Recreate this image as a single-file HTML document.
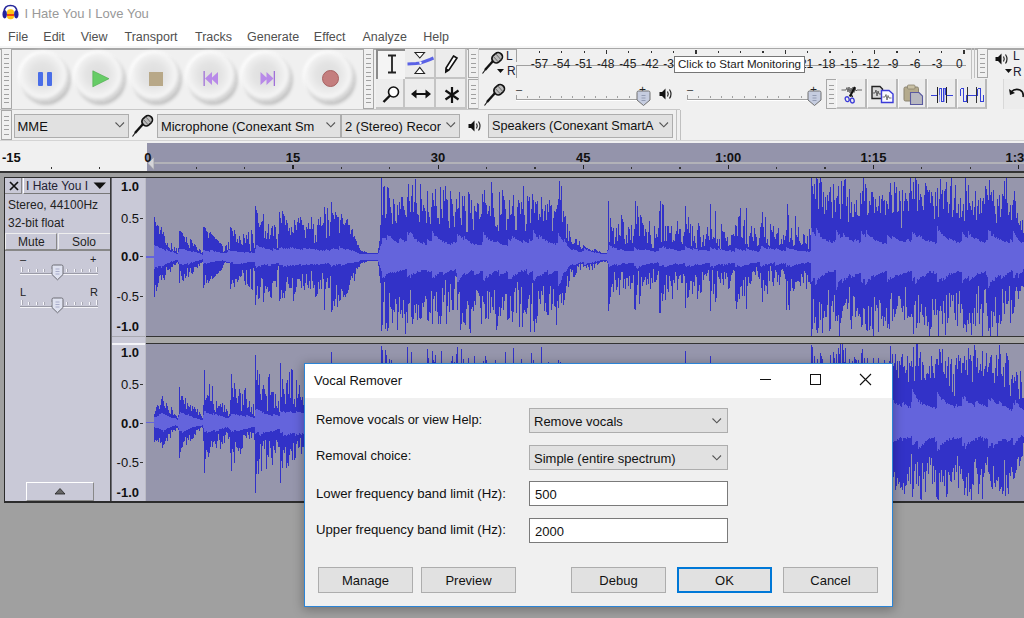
<!DOCTYPE html><html><head><meta charset="utf-8"><style>
*{margin:0;padding:0;box-sizing:border-box}
body{width:1024px;height:618px;overflow:hidden;position:relative;background:#a0a0a0;font-family:"Liberation Sans",sans-serif}
.t{position:absolute;white-space:nowrap;font-family:"Liberation Sans",sans-serif}
.b{position:absolute}
svg{position:absolute;overflow:visible}
</style></head><body><div class="b" style="left:0px;top:0px;width:1024px;height:47px;background:#fff"></div>
<svg style="left:0px;top:0px" width="22" height="22" viewBox="0 0 22 22">
<path d="M4.2 12 C4 7.5 6.5 5.6 10.5 5.6 C14.5 5.6 17 7.5 16.8 12" fill="none" stroke="#26279a" stroke-width="1.5"/>
<rect x="7" y="9.3" width="7" height="10" rx="3" fill="#fcc418"/>
<rect x="7" y="14" width="7" height="2" fill="#f2460e"/>
<ellipse cx="4.7" cy="14.3" rx="2.2" ry="4.1" fill="#23239c"/>
<ellipse cx="16.3" cy="14.3" rx="2.2" ry="4.1" fill="#23239c"/>
</svg>
<div class="t" style="left:24.5px;top:6.5px;font-size:13px;line-height:13px;color:#999;font-weight:normal;">I Hate You I Love You</div>
<div class="t" style="left:8px;top:31px;font-size:12.5px;line-height:12.5px;color:#505050;font-weight:normal;">File</div>
<div class="t" style="left:43.3px;top:31px;font-size:12.5px;line-height:12.5px;color:#505050;font-weight:normal;">Edit</div>
<div class="t" style="left:80.7px;top:31px;font-size:12.5px;line-height:12.5px;color:#505050;font-weight:normal;">View</div>
<div class="t" style="left:124.5px;top:31px;font-size:12.5px;line-height:12.5px;color:#505050;font-weight:normal;">Transport</div>
<div class="t" style="left:195px;top:31px;font-size:12.5px;line-height:12.5px;color:#505050;font-weight:normal;">Tracks</div>
<div class="t" style="left:247px;top:31px;font-size:12.5px;line-height:12.5px;color:#505050;font-weight:normal;">Generate</div>
<div class="t" style="left:313.8px;top:31px;font-size:12.5px;line-height:12.5px;color:#505050;font-weight:normal;">Effect</div>
<div class="t" style="left:362.5px;top:31px;font-size:12.5px;line-height:12.5px;color:#505050;font-weight:normal;">Analyze</div>
<div class="t" style="left:423.3px;top:31px;font-size:12.5px;line-height:12.5px;color:#505050;font-weight:normal;">Help</div>
<div class="b" style="left:0px;top:47px;width:1024px;height:94px;background:#f0f0f0"></div>
<div class="b" style="left:0px;top:46px;width:1024px;height:1.5px;background:#f6f6f6"></div>
<div class="b" style="left:0px;top:47.7px;width:1024px;height:2px;background:#a8a8a8"></div>
<div class="b" style="left:1px;top:48px;width:11px;height:61px;background:#f0f0f0;border:1px solid #a8a8a8"></div>
<div class="b" style="left:4px;top:54.0px;width:5px;height:1px;background:#a0a0a0"></div>
<div class="b" style="left:4px;top:58.4px;width:5px;height:1px;background:#a0a0a0"></div>
<div class="b" style="left:4px;top:62.8px;width:5px;height:1px;background:#a0a0a0"></div>
<div class="b" style="left:4px;top:67.2px;width:5px;height:1px;background:#a0a0a0"></div>
<div class="b" style="left:4px;top:71.6px;width:5px;height:1px;background:#a0a0a0"></div>
<div class="b" style="left:4px;top:76.0px;width:5px;height:1px;background:#a0a0a0"></div>
<div class="b" style="left:4px;top:80.4px;width:5px;height:1px;background:#a0a0a0"></div>
<div class="b" style="left:4px;top:84.80000000000001px;width:5px;height:1px;background:#a0a0a0"></div>
<div class="b" style="left:4px;top:89.2px;width:5px;height:1px;background:#a0a0a0"></div>
<div class="b" style="left:4px;top:93.6px;width:5px;height:1px;background:#a0a0a0"></div>
<div class="b" style="left:4px;top:98.0px;width:5px;height:1px;background:#a0a0a0"></div>
<div class="b" style="left:4px;top:102.4px;width:5px;height:1px;background:#a0a0a0"></div>
<div class="b" style="left:0px;top:109px;width:680px;height:1px;background:#c8c8c8"></div>
<div class="b" style="left:19.799999999999997px;top:53.099999999999994px;width:49px;height:49px;border-radius:50%;background:radial-gradient(circle at 46% 44%, #dedede 0, #e4e4e4 30%, #eeeeee 48%, #f8f8f8 62%, #fcfcfc 76%, #f2f2f2 100%);box-shadow:inset -2px -3px 3px rgba(0,0,0,0.16), 1.5px 2.5px 3px rgba(0,0,0,0.22), -2px -2px 3px rgba(255,255,255,0.9);filter:blur(0.9px)"></div>
<div class="b" style="left:75.3px;top:53.099999999999994px;width:49px;height:49px;border-radius:50%;background:radial-gradient(circle at 46% 44%, #dedede 0, #e4e4e4 30%, #eeeeee 48%, #f8f8f8 62%, #fcfcfc 76%, #f2f2f2 100%);box-shadow:inset -2px -3px 3px rgba(0,0,0,0.16), 1.5px 2.5px 3px rgba(0,0,0,0.22), -2px -2px 3px rgba(255,255,255,0.9);filter:blur(0.9px)"></div>
<div class="b" style="left:130.7px;top:53.099999999999994px;width:49px;height:49px;border-radius:50%;background:radial-gradient(circle at 46% 44%, #dedede 0, #e4e4e4 30%, #eeeeee 48%, #f8f8f8 62%, #fcfcfc 76%, #f2f2f2 100%);box-shadow:inset -2px -3px 3px rgba(0,0,0,0.16), 1.5px 2.5px 3px rgba(0,0,0,0.22), -2px -2px 3px rgba(255,255,255,0.9);filter:blur(0.9px)"></div>
<div class="b" style="left:186.7px;top:53.099999999999994px;width:49px;height:49px;border-radius:50%;background:radial-gradient(circle at 46% 44%, #dedede 0, #e4e4e4 30%, #eeeeee 48%, #f8f8f8 62%, #fcfcfc 76%, #f2f2f2 100%);box-shadow:inset -2px -3px 3px rgba(0,0,0,0.16), 1.5px 2.5px 3px rgba(0,0,0,0.22), -2px -2px 3px rgba(255,255,255,0.9);filter:blur(0.9px)"></div>
<div class="b" style="left:241.7px;top:53.099999999999994px;width:49px;height:49px;border-radius:50%;background:radial-gradient(circle at 46% 44%, #dedede 0, #e4e4e4 30%, #eeeeee 48%, #f8f8f8 62%, #fcfcfc 76%, #f2f2f2 100%);box-shadow:inset -2px -3px 3px rgba(0,0,0,0.16), 1.5px 2.5px 3px rgba(0,0,0,0.22), -2px -2px 3px rgba(255,255,255,0.9);filter:blur(0.9px)"></div>
<div class="b" style="left:305.1px;top:53.099999999999994px;width:49px;height:49px;border-radius:50%;background:radial-gradient(circle at 46% 44%, #dedede 0, #e4e4e4 30%, #eeeeee 48%, #f8f8f8 62%, #fcfcfc 76%, #f2f2f2 100%);box-shadow:inset -2px -3px 3px rgba(0,0,0,0.16), 1.5px 2.5px 3px rgba(0,0,0,0.22), -2px -2px 3px rgba(255,255,255,0.9);filter:blur(0.9px)"></div>
<div class="b" style="left:37.8px;top:72px;width:5px;height:13.5px;background:#4a6ee8;border-radius:1px"></div>
<div class="b" style="left:46.5px;top:72px;width:5px;height:13.5px;background:#4a6ee8;border-radius:1px"></div>
<svg style="left:92px;top:70px" width="18" height="18"><path d="M0.8 0.8 L17 8.7 L0.8 16.8Z" fill="#66cc66" stroke="#4aa94a" stroke-width="0.6"/></svg>
<div class="b" style="left:148.8px;top:72px;width:14px;height:13.5px;background:#b8a888"></div>
<svg style="left:203px;top:70px" width="17" height="17"><rect x="0.5" y="1" width="1.3" height="15" fill="#a070d8"/><path d="M2 8.5 L9 2 V15Z M8 8.5 L15 2 V15Z" fill="#b88ae8"/></svg>
<svg style="left:259px;top:70px" width="17" height="17"><rect x="14.7" y="1" width="1.3" height="15" fill="#a070d8"/><path d="M14.5 8.5 L7.5 2 V15Z M8.5 8.5 L1.5 2 V15Z" fill="#b88ae8"/></svg>
<div class="b" style="left:321.6px;top:69.6px;width:17px;height:17px;border-radius:50%;background:#c47e7e;border:1px solid #a86262"></div>
<div class="b" style="left:363px;top:48px;width:11px;height:61px;background:#f0f0f0;border:1px solid #a8a8a8"></div>
<div class="b" style="left:366px;top:54.0px;width:5px;height:1px;background:#a0a0a0"></div>
<div class="b" style="left:366px;top:58.4px;width:5px;height:1px;background:#a0a0a0"></div>
<div class="b" style="left:366px;top:62.8px;width:5px;height:1px;background:#a0a0a0"></div>
<div class="b" style="left:366px;top:67.2px;width:5px;height:1px;background:#a0a0a0"></div>
<div class="b" style="left:366px;top:71.6px;width:5px;height:1px;background:#a0a0a0"></div>
<div class="b" style="left:366px;top:76.0px;width:5px;height:1px;background:#a0a0a0"></div>
<div class="b" style="left:366px;top:80.4px;width:5px;height:1px;background:#a0a0a0"></div>
<div class="b" style="left:366px;top:84.80000000000001px;width:5px;height:1px;background:#a0a0a0"></div>
<div class="b" style="left:366px;top:89.2px;width:5px;height:1px;background:#a0a0a0"></div>
<div class="b" style="left:366px;top:93.6px;width:5px;height:1px;background:#a0a0a0"></div>
<div class="b" style="left:366px;top:98.0px;width:5px;height:1px;background:#a0a0a0"></div>
<div class="b" style="left:366px;top:102.4px;width:5px;height:1px;background:#a0a0a0"></div>
<div class="b" style="left:375.5px;top:48.5px;width:29px;height:30px;background:#f4f4f4;border-top:2px solid #8c8c8c;border-left:2px solid #8c8c8c"></div>
<div class="b" style="left:404.5px;top:48.5px;width:31px;height:30px;background:#ececec;border-right:2px solid #c4c4c4;border-bottom:2px solid #c4c4c4"></div>
<div class="b" style="left:435.5px;top:48.5px;width:31px;height:30px;background:#ececec;border-right:2px solid #c4c4c4;border-bottom:2px solid #c4c4c4"></div>
<div class="b" style="left:375.5px;top:78.5px;width:29px;height:30px;background:#ececec;border-right:2px solid #c4c4c4;border-bottom:2px solid #c4c4c4"></div>
<div class="b" style="left:404.5px;top:78.5px;width:31px;height:30px;background:#ececec;border-right:2px solid #c4c4c4;border-bottom:2px solid #c4c4c4"></div>
<div class="b" style="left:435.5px;top:78.5px;width:31px;height:30px;background:#ececec;border-right:2px solid #c4c4c4;border-bottom:2px solid #c4c4c4"></div>
<svg style="left:383.5px;top:52px" width="22" height="24"><path d="M4 3.5 H12 M8 3.5 V20.5 M4 20.5 H12" stroke="#222" stroke-width="1.8" fill="none"/></svg>
<svg style="left:404px;top:48px" width="32" height="30"><path d="M11 4.5 H20.5 L15.8 10Z M11 25.5 H20.5 L15.8 19.5Z" fill="#fff" stroke="#222" stroke-width="1.1"/><path d="M3.5 16 L12 15.6 L16.5 15 L22 13 L26 11.5 L29.5 10" stroke="#5a62e6" stroke-width="3" fill="none"/><circle cx="16.5" cy="14.8" r="1.2" fill="#fff"/></svg>
<svg style="left:444px;top:54px" width="16" height="20"><path d="M9.5 2 L13 4 L5 16 L1.8 18 L2 14 Z" fill="#fff" stroke="#111" stroke-width="1.6"/><path d="M2 14 L5 16 L1.8 18Z" fill="#111"/></svg>
<svg style="left:381px;top:84px" width="22" height="22"><circle cx="12.5" cy="8" r="5" fill="#fff" stroke="#111" stroke-width="1.6"/><path d="M9 11.5 L2.5 18" stroke="#111" stroke-width="2.4"/></svg>
<svg style="left:410px;top:86px" width="22" height="16"><path d="M5 8 H17" stroke="#111" stroke-width="2"/><path d="M1 8 L6.5 3.5 V12.5Z M21 8 L15.5 3.5 V12.5Z" fill="#111"/></svg>
<svg style="left:444px;top:86px" width="16" height="18"><path d="M8 1 V17 M1.5 4.5 L14.5 13.5 M14.5 4.5 L1.5 13.5" stroke="#111" stroke-width="2.2"/></svg>
<div class="b" style="left:468px;top:48px;width:11px;height:30px;background:#f0f0f0;border:1px solid #a8a8a8"></div>
<div class="b" style="left:471px;top:54.0px;width:5px;height:1px;background:#a0a0a0"></div>
<div class="b" style="left:471px;top:58.4px;width:5px;height:1px;background:#a0a0a0"></div>
<div class="b" style="left:471px;top:62.8px;width:5px;height:1px;background:#a0a0a0"></div>
<div class="b" style="left:471px;top:67.2px;width:5px;height:1px;background:#a0a0a0"></div>
<div class="b" style="left:471px;top:71.6px;width:5px;height:1px;background:#a0a0a0"></div>
<div class="b" style="left:468px;top:79px;width:11px;height:30px;background:#f0f0f0;border:1px solid #a8a8a8"></div>
<div class="b" style="left:471px;top:85.0px;width:5px;height:1px;background:#a0a0a0"></div>
<div class="b" style="left:471px;top:89.4px;width:5px;height:1px;background:#a0a0a0"></div>
<div class="b" style="left:471px;top:93.8px;width:5px;height:1px;background:#a0a0a0"></div>
<div class="b" style="left:471px;top:98.2px;width:5px;height:1px;background:#a0a0a0"></div>
<div class="b" style="left:471px;top:102.6px;width:5px;height:1px;background:#a0a0a0"></div>
<div class="b" style="left:478px;top:48px;width:1px;height:61px;background:#d0d0d0"></div>
<svg style="left:481px;top:51px" width="26" height="24" viewBox="0 0 26 24"><path d="M12 10 L4 19" stroke="#111" stroke-width="2.4"/><path d="M4.5 18.5 L1.5 22.5" stroke="#111" stroke-width="1.1"/><g transform="rotate(-42 16 6.5)"><rect x="10.5" y="2.5" width="11" height="8.5" rx="4" fill="#bcbcbc" stroke="#111" stroke-width="1.7"/><path d="M14 3 V10.5 M17.5 3 V10.5" stroke="#666" stroke-width="0.9"/></g></svg>
<div class="t" style="left:506px;top:50px;font-size:12px;line-height:12px;color:#223;font-weight:normal;font-size:12px">L</div>
<div class="t" style="left:507px;top:65px;font-size:12px;line-height:12px;color:#223;font-weight:normal;">R</div>
<svg style="left:497px;top:69px" width="8" height="5"><path d="M0 0 H7 L3.5 4Z" fill="#111"/></svg>
<div class="b" style="left:516px;top:48.5px;width:450px;height:13px;border-left:1px solid #a0a0a0;background:#f0f0f0"></div>
<div class="b" style="left:516px;top:64.5px;width:450px;height:13px;border-left:1px solid #a0a0a0;border-top:1px solid #a0a0a0;background:#f0f0f0"></div>
<div class="b" style="left:538.8px;top:51px;width:1.3px;height:2px;background:#333"></div>
<div class="t" style="left:528.4px;top:58px;font-size:12px;line-height:12px;color:#222;font-weight:normal;width:22px;text-align:center">-57</div>
<div class="b" style="left:561.15px;top:51px;width:1.3px;height:2px;background:#333"></div>
<div class="t" style="left:550.5px;top:58px;font-size:12px;line-height:12px;color:#222;font-weight:normal;width:22px;text-align:center">-54</div>
<div class="b" style="left:583.5px;top:51px;width:1.3px;height:2px;background:#333"></div>
<div class="t" style="left:572.6px;top:58px;font-size:12px;line-height:12px;color:#222;font-weight:normal;width:22px;text-align:center">-51</div>
<div class="b" style="left:605.85px;top:50px;width:1.3px;height:4px;background:#333"></div>
<div class="t" style="left:594.7px;top:58px;font-size:12px;line-height:12px;color:#222;font-weight:normal;width:22px;text-align:center">-48</div>
<div class="b" style="left:628.1999999999999px;top:51px;width:1.3px;height:2px;background:#333"></div>
<div class="t" style="left:616.8px;top:58px;font-size:12px;line-height:12px;color:#222;font-weight:normal;width:22px;text-align:center">-45</div>
<div class="b" style="left:650.55px;top:51px;width:1.3px;height:2px;background:#333"></div>
<div class="t" style="left:638.9px;top:58px;font-size:12px;line-height:12px;color:#222;font-weight:normal;width:22px;text-align:center">-42</div>
<div class="b" style="left:672.9px;top:51px;width:1.3px;height:2px;background:#333"></div>
<div class="t" style="left:661.0px;top:58px;font-size:12px;line-height:12px;color:#222;font-weight:normal;width:22px;text-align:center">-39</div>
<div class="b" style="left:695.25px;top:50px;width:1.3px;height:4px;background:#333"></div>
<div class="t" style="left:683.1px;top:58px;font-size:12px;line-height:12px;color:#222;font-weight:normal;width:22px;text-align:center">-36</div>
<div class="b" style="left:717.6px;top:51px;width:1.3px;height:2px;background:#333"></div>
<div class="t" style="left:705.2px;top:58px;font-size:12px;line-height:12px;color:#222;font-weight:normal;width:22px;text-align:center">-33</div>
<div class="b" style="left:739.9499999999999px;top:51px;width:1.3px;height:2px;background:#333"></div>
<div class="t" style="left:727.3px;top:58px;font-size:12px;line-height:12px;color:#222;font-weight:normal;width:22px;text-align:center">-30</div>
<div class="b" style="left:762.3px;top:51px;width:1.3px;height:2px;background:#333"></div>
<div class="t" style="left:749.4px;top:58px;font-size:12px;line-height:12px;color:#222;font-weight:normal;width:22px;text-align:center">-27</div>
<div class="b" style="left:784.65px;top:50px;width:1.3px;height:4px;background:#333"></div>
<div class="t" style="left:771.5px;top:58px;font-size:12px;line-height:12px;color:#222;font-weight:normal;width:22px;text-align:center">-24</div>
<div class="b" style="left:807.0px;top:51px;width:1.3px;height:2px;background:#333"></div>
<div class="t" style="left:793.6px;top:58px;font-size:12px;line-height:12px;color:#222;font-weight:normal;width:22px;text-align:center">-21</div>
<div class="b" style="left:829.35px;top:51px;width:1.3px;height:2px;background:#333"></div>
<div class="t" style="left:815.7px;top:58px;font-size:12px;line-height:12px;color:#222;font-weight:normal;width:22px;text-align:center">-18</div>
<div class="b" style="left:851.6999999999999px;top:51px;width:1.3px;height:2px;background:#333"></div>
<div class="t" style="left:837.8px;top:58px;font-size:12px;line-height:12px;color:#222;font-weight:normal;width:22px;text-align:center">-15</div>
<div class="b" style="left:874.05px;top:50px;width:1.3px;height:4px;background:#333"></div>
<div class="t" style="left:859.9px;top:58px;font-size:12px;line-height:12px;color:#222;font-weight:normal;width:22px;text-align:center">-12</div>
<div class="b" style="left:896.4px;top:51px;width:1.3px;height:2px;background:#333"></div>
<div class="t" style="left:882.0px;top:58px;font-size:12px;line-height:12px;color:#222;font-weight:normal;width:22px;text-align:center">-9</div>
<div class="b" style="left:918.75px;top:51px;width:1.3px;height:2px;background:#333"></div>
<div class="t" style="left:904.1px;top:58px;font-size:12px;line-height:12px;color:#222;font-weight:normal;width:22px;text-align:center">-6</div>
<div class="b" style="left:941.1px;top:51px;width:1.3px;height:2px;background:#333"></div>
<div class="t" style="left:926.2px;top:58px;font-size:12px;line-height:12px;color:#222;font-weight:normal;width:22px;text-align:center">-3</div>
<div class="b" style="left:963.4499999999999px;top:50px;width:1.3px;height:4px;background:#333"></div>
<div class="t" style="left:948.3px;top:58px;font-size:12px;line-height:12px;color:#222;font-weight:normal;width:22px;text-align:center">0</div>
<div class="b" style="left:674px;top:56px;width:131px;height:16.5px;background:#fff;border:1px solid #767676"></div>
<div class="t" style="left:678px;top:58px;font-size:11.6px;line-height:11.6px;color:#222;font-weight:normal;">Click to Start Monitoring</div>
<div class="b" style="left:971px;top:48px;width:1px;height:61px;background:#c0c0c0"></div>
<div class="b" style="left:974px;top:48px;width:1px;height:30px;background:#c0c0c0"></div>
<div class="b" style="left:977px;top:48px;width:11px;height:30px;background:#f0f0f0;border:1px solid #a8a8a8"></div>
<div class="b" style="left:980px;top:54.0px;width:5px;height:1px;background:#a0a0a0"></div>
<div class="b" style="left:980px;top:58.4px;width:5px;height:1px;background:#a0a0a0"></div>
<div class="b" style="left:980px;top:62.8px;width:5px;height:1px;background:#a0a0a0"></div>
<div class="b" style="left:980px;top:67.2px;width:5px;height:1px;background:#a0a0a0"></div>
<div class="b" style="left:980px;top:71.6px;width:5px;height:1px;background:#a0a0a0"></div>
<svg style="left:994px;top:51px" width="16" height="16" viewBox="0 0 16 16"><path d="M1.5 6 H4 L7.5 2.5 V13.5 L4 10 H1.5Z" fill="#111"/><path d="M9.5 5.5 Q11 8 9.5 10.5 M11.5 3.5 Q14.5 8 11.5 12.5" stroke="#222" stroke-width="1.2" fill="none"/></svg>
<div class="t" style="left:1013px;top:50px;font-size:12px;line-height:12px;color:#223;font-weight:normal;">L</div>
<div class="t" style="left:1013px;top:66px;font-size:12px;line-height:12px;color:#223;font-weight:normal;">R</div>
<svg style="left:1005px;top:69px" width="8" height="5"><path d="M0 0 H7 L3.5 4Z" fill="#111"/></svg>
<svg style="left:483px;top:83px" width="26" height="24" viewBox="0 0 26 24"><path d="M12 10 L4 19" stroke="#111" stroke-width="2.4"/><path d="M4.5 18.5 L1.5 22.5" stroke="#111" stroke-width="1.1"/><g transform="rotate(-42 16 6.5)"><rect x="10.5" y="2.5" width="11" height="8.5" rx="4" fill="#bcbcbc" stroke="#111" stroke-width="1.7"/><path d="M14 3 V10.5 M17.5 3 V10.5" stroke="#666" stroke-width="0.9"/></g></svg>
<div class="t" style="left:516px;top:84px;font-size:11px;line-height:11px;color:#333;font-weight:normal;">&#8211;</div>
<div class="b" style="left:516px;top:99px;width:124px;height:1px;background:#a0a0a0"></div>
<div class="b" style="left:516px;top:100px;width:124px;height:1px;background:#ffffff"></div>
<div class="b" style="left:516.0px;top:95px;width:1px;height:4px;background:#a0a0a0"></div>
<div class="b" style="left:527.2727272727273px;top:96px;width:1px;height:2px;background:#a0a0a0"></div>
<div class="b" style="left:538.5454545454545px;top:96px;width:1px;height:2px;background:#a0a0a0"></div>
<div class="b" style="left:549.8181818181819px;top:96px;width:1px;height:2px;background:#a0a0a0"></div>
<div class="b" style="left:561.0909090909091px;top:96px;width:1px;height:2px;background:#a0a0a0"></div>
<div class="b" style="left:572.3636363636364px;top:96px;width:1px;height:2px;background:#a0a0a0"></div>
<div class="b" style="left:583.6363636363636px;top:96px;width:1px;height:2px;background:#a0a0a0"></div>
<div class="b" style="left:594.9090909090909px;top:96px;width:1px;height:2px;background:#a0a0a0"></div>
<div class="b" style="left:606.1818181818182px;top:96px;width:1px;height:2px;background:#a0a0a0"></div>
<div class="b" style="left:617.4545454545455px;top:96px;width:1px;height:2px;background:#a0a0a0"></div>
<div class="b" style="left:628.7272727272727px;top:96px;width:1px;height:2px;background:#a0a0a0"></div>
<div class="b" style="left:640.0px;top:95px;width:1px;height:4px;background:#a0a0a0"></div>
<div class="t" style="left:639px;top:84px;font-size:12px;line-height:12px;color:#222;font-weight:normal;">+</div>
<svg style="left:635.5px;top:90px" width="15" height="16" viewBox="0 0 15 16"><path d="M1 2.5 Q1 1 2.5 1 H12.5 Q14 1 14 2.5 V10 L7.5 15.5 L1 10Z" fill="#c6cde0" stroke="#707070" stroke-width="1"/><path d="M5.5 5.5 H9.5 M5.5 8 H9.5 M5.5 10.5 H9.5" stroke="#8890a8" stroke-width="0.8"/></svg>
<svg style="left:658px;top:86px" width="16" height="16" viewBox="0 0 16 16"><path d="M1.5 6 H4 L7.5 2.5 V13.5 L4 10 H1.5Z" fill="#111"/><path d="M9.5 5.5 Q11 8 9.5 10.5 M11.5 3.5 Q14.5 8 11.5 12.5" stroke="#222" stroke-width="1.2" fill="none"/></svg>
<div class="t" style="left:687px;top:84px;font-size:11px;line-height:11px;color:#333;font-weight:normal;">&#8211;</div>
<div class="b" style="left:687px;top:99px;width:125px;height:1px;background:#a0a0a0"></div>
<div class="b" style="left:687px;top:100px;width:125px;height:1px;background:#ffffff"></div>
<div class="b" style="left:687.0px;top:95px;width:1px;height:4px;background:#a0a0a0"></div>
<div class="b" style="left:698.3636363636364px;top:96px;width:1px;height:2px;background:#a0a0a0"></div>
<div class="b" style="left:709.7272727272727px;top:96px;width:1px;height:2px;background:#a0a0a0"></div>
<div class="b" style="left:721.0909090909091px;top:96px;width:1px;height:2px;background:#a0a0a0"></div>
<div class="b" style="left:732.4545454545455px;top:96px;width:1px;height:2px;background:#a0a0a0"></div>
<div class="b" style="left:743.8181818181819px;top:96px;width:1px;height:2px;background:#a0a0a0"></div>
<div class="b" style="left:755.1818181818182px;top:96px;width:1px;height:2px;background:#a0a0a0"></div>
<div class="b" style="left:766.5454545454545px;top:96px;width:1px;height:2px;background:#a0a0a0"></div>
<div class="b" style="left:777.9090909090909px;top:96px;width:1px;height:2px;background:#a0a0a0"></div>
<div class="b" style="left:789.2727272727273px;top:96px;width:1px;height:2px;background:#a0a0a0"></div>
<div class="b" style="left:800.6363636363636px;top:96px;width:1px;height:2px;background:#a0a0a0"></div>
<div class="b" style="left:812.0px;top:95px;width:1px;height:4px;background:#a0a0a0"></div>
<div class="t" style="left:810px;top:84px;font-size:12px;line-height:12px;color:#222;font-weight:normal;">+</div>
<svg style="left:806.5px;top:90px" width="15" height="16" viewBox="0 0 15 16"><path d="M1 2.5 Q1 1 2.5 1 H12.5 Q14 1 14 2.5 V10 L7.5 15.5 L1 10Z" fill="#c6cde0" stroke="#707070" stroke-width="1"/><path d="M5.5 5.5 H9.5 M5.5 8 H9.5 M5.5 10.5 H9.5" stroke="#8890a8" stroke-width="0.8"/></svg>
<div class="b" style="left:826px;top:79px;width:11px;height:30px;background:#f0f0f0;border:1px solid #a8a8a8"></div>
<div class="b" style="left:829px;top:85.0px;width:5px;height:1px;background:#a0a0a0"></div>
<div class="b" style="left:829px;top:89.4px;width:5px;height:1px;background:#a0a0a0"></div>
<div class="b" style="left:829px;top:93.8px;width:5px;height:1px;background:#a0a0a0"></div>
<div class="b" style="left:829px;top:98.2px;width:5px;height:1px;background:#a0a0a0"></div>
<div class="b" style="left:829px;top:102.6px;width:5px;height:1px;background:#a0a0a0"></div>
<div class="b" style="left:836px;top:79px;width:31px;height:30px;background:#ececec;border-left:1px solid #fafafa;border-right:2px solid #b8b8b8;border-bottom:2px solid #c0c0c0"></div>
<div class="b" style="left:867px;top:79px;width:30.5px;height:30px;background:#ececec;border-left:1px solid #fafafa;border-right:2px solid #b8b8b8;border-bottom:2px solid #c0c0c0"></div>
<div class="b" style="left:897.5px;top:79px;width:29.5px;height:30px;background:#ececec;border-left:1px solid #fafafa;border-right:2px solid #b8b8b8;border-bottom:2px solid #c0c0c0"></div>
<div class="b" style="left:927px;top:79px;width:30px;height:30px;background:#ececec;border-left:1px solid #fafafa;border-right:2px solid #b8b8b8;border-bottom:2px solid #c0c0c0"></div>
<div class="b" style="left:957px;top:79px;width:30px;height:30px;background:#ececec;border-left:1px solid #fafafa;border-right:2px solid #b8b8b8;border-bottom:2px solid #c0c0c0"></div>
<svg style="left:836px;top:78px" width="31" height="30"><path d="M5.5 12 H10 L11 9.5 L12 14 L13 9 L14 15 L15 10 L16 13.5 L17 9 L18 14.5 L19 10 L20 13 L21 12 H26" stroke="#444" stroke-width="0.8" fill="none"/><path d="M19 9 L13.8 18.5" stroke="#111" stroke-width="2.2"/><path d="M15.5 17 L16.5 19" stroke="#111" stroke-width="1.4"/><ellipse cx="11.2" cy="21.2" rx="1.9" ry="2.5" transform="rotate(-20 11.2 21.2)" fill="none" stroke="#3a3ad8" stroke-width="1.3"/><ellipse cx="16.3" cy="22.5" rx="1.9" ry="2.5" transform="rotate(-10 16.3 22.5)" fill="none" stroke="#3a3ad8" stroke-width="1.3"/></svg>
<svg style="left:867px;top:78px" width="31" height="30"><path d="M5 8.5 H13 L15.5 11 V20.5 H5Z" fill="#d8d8d8" stroke="#222" stroke-width="1.4"/><path d="M6 15 H8 L9 12 L10 18 L11 13 L12 16 H14" stroke="#444" stroke-width="0.8" fill="none"/><path d="M14.5 12.5 H22 L26 16 V24.5 H14.5Z" fill="#fafaff" stroke="#3a3ad8" stroke-width="1.4"/><path d="M15.5 19 H18 L19 16.5 L20 22 L21 17.5 L22 20 H24.5" stroke="#555" stroke-width="0.8" fill="none"/></svg>
<svg style="left:897.5px;top:78px" width="30" height="30"><rect x="6" y="9" width="14.5" height="14" rx="1.5" fill="#b4aa8c" stroke="#8a8370" stroke-width="1"/><rect x="9.5" y="7" width="7.5" height="4" rx="1" fill="#c8c0a4" stroke="#8a8370" stroke-width="0.8"/><path d="M12.5 14.5 H21 L24.5 18 V26.5 H12.5Z" fill="#b8b8c0" stroke="#5a5aa0" stroke-width="1.1"/></svg>
<svg style="left:927px;top:79px" width="30" height="30" shape-rendering="crispEdges"><path d="M4 16.5 H10 M20 16.5 H26" stroke="#3440d8" stroke-width="1"/><path d="M10.5 8 V24 M19.5 8 V24" stroke="#222" stroke-width="1.6"/><path d="M12.5 16 V9.5 H14.5 V22.5 H16.5 V9.5 H18 V16" stroke="#3440d8" stroke-width="1" fill="none"/><path d="M12 9 V23 M17 9 V23" stroke="#7078e8" stroke-width="0.6"/></svg>
<svg style="left:957px;top:79px" width="30" height="30" shape-rendering="crispEdges"><path d="M11 16.5 H19" stroke="#3440d8" stroke-width="1"/><path d="M10.5 8 V24 M19.5 8 V24" stroke="#333" stroke-width="1.6"/><path d="M3.5 16.5 V11 Q3.5 9.5 5 9.5 Q6.5 9.5 6.5 11 V21 Q6.5 23 8 23 Q9.5 23 9.5 21 V16 M20.5 16.5 V11 Q20.5 9.5 22 9.5 Q23.5 9.5 23.5 11 V21 Q23.5 23 25 23 Q26.5 23 26.5 21 V16" stroke="#3440d8" stroke-width="1" fill="none"/></svg>
<div class="b" style="left:1003px;top:79px;width:21px;height:30px;background:#ececec;border-left:1px solid #d8d8d8"></div>
<svg style="left:1008px;top:86px" width="18" height="16"><path d="M3 6 Q7 2 12 4 Q16 6 15 11" stroke="#111" stroke-width="1.6" fill="none"/><path d="M1 3 L2 9 L7 7Z" fill="#111"/></svg>
<div class="b" style="left:1px;top:110px;width:11px;height:30px;background:#f0f0f0;border:1px solid #a8a8a8"></div>
<div class="b" style="left:4px;top:116.0px;width:5px;height:1px;background:#a0a0a0"></div>
<div class="b" style="left:4px;top:120.4px;width:5px;height:1px;background:#a0a0a0"></div>
<div class="b" style="left:4px;top:124.8px;width:5px;height:1px;background:#a0a0a0"></div>
<div class="b" style="left:4px;top:129.2px;width:5px;height:1px;background:#a0a0a0"></div>
<div class="b" style="left:4px;top:133.6px;width:5px;height:1px;background:#a0a0a0"></div>
<div class="b" style="left:13.5px;top:113.5px;width:115.5px;height:24px;background:#e1e1e1;border:1px solid #adadad"></div>
<div class="t" style="left:17.5px;top:119px;width:91.5px;overflow:hidden;font-size:13px;line-height:15px;color:#111">MME</div>
<svg style="left:114.5px;top:122px" width="10" height="6"><path d="M0.5 0.5 L4.8 4.8 L9 0.5" stroke="#555" stroke-width="1.1" fill="none"/></svg>
<svg style="left:131px;top:114px" width="26" height="24" viewBox="0 0 26 24"><path d="M12 10 L4 19" stroke="#111" stroke-width="2.4"/><path d="M4.5 18.5 L1.5 22.5" stroke="#111" stroke-width="1.1"/><g transform="rotate(-42 16 6.5)"><rect x="10.5" y="2.5" width="11" height="8.5" rx="4" fill="#bcbcbc" stroke="#111" stroke-width="1.7"/><path d="M14 3 V10.5 M17.5 3 V10.5" stroke="#666" stroke-width="0.9"/></g></svg>
<div class="b" style="left:157px;top:113.5px;width:183.5px;height:24px;background:#e1e1e1;border:1px solid #adadad"></div>
<div class="t" style="left:161px;top:119px;width:158px;overflow:hidden;font-size:12.9px;line-height:15px;color:#111">Microphone (Conexant Sm</div>
<svg style="left:326.0px;top:122px" width="10" height="6"><path d="M0.5 0.5 L4.8 4.8 L9 0.5" stroke="#555" stroke-width="1.1" fill="none"/></svg>
<div class="b" style="left:341px;top:113.5px;width:119px;height:24px;background:#e1e1e1;border:1px solid #adadad"></div>
<div class="t" style="left:345px;top:119px;width:96px;overflow:hidden;font-size:13px;line-height:15px;color:#111">2 (Stereo) Recor</div>
<svg style="left:445.5px;top:122px" width="10" height="6"><path d="M0.5 0.5 L4.8 4.8 L9 0.5" stroke="#555" stroke-width="1.1" fill="none"/></svg>
<svg style="left:467px;top:118px" width="16" height="16" viewBox="0 0 16 16"><path d="M1.5 6 H4 L7.5 2.5 V13.5 L4 10 H1.5Z" fill="#111"/><path d="M9.5 5.5 Q11 8 9.5 10.5 M11.5 3.5 Q14.5 8 11.5 12.5" stroke="#222" stroke-width="1.2" fill="none"/></svg>
<div class="b" style="left:488px;top:113.5px;width:185px;height:24px;background:#e1e1e1;border:1px solid #adadad"></div>
<div class="t" style="left:492px;top:119px;width:163px;overflow:hidden;font-size:12.7px;line-height:15px;color:#111">Speakers (Conexant SmartA</div>
<svg style="left:658.5px;top:122px" width="10" height="6"><path d="M0.5 0.5 L4.8 4.8 L9 0.5" stroke="#555" stroke-width="1.1" fill="none"/></svg>
<div class="b" style="left:676px;top:110px;width:1px;height:31px;background:#c0c0c0"></div>
<div class="b" style="left:680px;top:110px;width:1px;height:31px;background:#c0c0c0"></div>
<div class="b" style="left:0px;top:140px;width:1024px;height:1px;background:#d0d0d0"></div>
<div class="b" style="left:0px;top:140px;width:1024px;height:1px;background:#d4d4d4"></div>
<div class="b" style="left:0px;top:141px;width:1024px;height:30px;background:#f0f0f0"></div>
<div class="b" style="left:147px;top:143px;width:877px;height:28px;background:#9494ab"></div>
<div class="b" style="left:154px;top:162px;width:870px;height:2px;background:#b2b2b8"></div>
<svg style="left:147px;top:155.5px" width="9" height="15"><path d="M0.8 7.3 L7 1 V13.8Z" fill="#d4d4d8" stroke="#9a9aa4" stroke-width="0.8"/></svg>
<div class="t" style="left:2px;top:151px;font-size:13px;line-height:13px;color:#111;font-weight:bold;">-15</div>
<div class="t" style="left:117.9px;top:151px;width:60px;text-align:center;font-size:13px;line-height:13px;font-weight:bold;color:#111">0</div>
<div class="t" style="left:263.0px;top:151px;width:60px;text-align:center;font-size:13px;line-height:13px;font-weight:bold;color:#111">15</div>
<div class="t" style="left:408.1px;top:151px;width:60px;text-align:center;font-size:13px;line-height:13px;font-weight:bold;color:#111">30</div>
<div class="t" style="left:553.2px;top:151px;width:60px;text-align:center;font-size:13px;line-height:13px;font-weight:bold;color:#111">45</div>
<div class="t" style="left:698.3px;top:151px;width:60px;text-align:center;font-size:13px;line-height:13px;font-weight:bold;color:#111">1:00</div>
<div class="t" style="left:843.4px;top:151px;width:60px;text-align:center;font-size:13px;line-height:13px;font-weight:bold;color:#111">1:15</div>
<div class="t" style="left:988.5px;top:151px;width:60px;text-align:center;font-size:13px;line-height:13px;font-weight:bold;color:#111">1:30</div>
<div class="b" style="left:50.56666666666667px;top:167px;width:1.3px;height:1.5px;background:#333"></div>
<div class="b" style="left:98.93333333333334px;top:167px;width:1.3px;height:1.5px;background:#333"></div>
<div class="b" style="left:195.66666666666669px;top:167px;width:1.3px;height:1.5px;background:#333"></div>
<div class="b" style="left:244.03333333333333px;top:167px;width:1.3px;height:1.5px;background:#333"></div>
<div class="b" style="left:292.4px;top:164.5px;width:1.3px;height:4.5px;background:#222"></div>
<div class="b" style="left:340.76666666666665px;top:167px;width:1.3px;height:1.5px;background:#333"></div>
<div class="b" style="left:389.1333333333333px;top:167px;width:1.3px;height:1.5px;background:#333"></div>
<div class="b" style="left:437.5px;top:164.5px;width:1.3px;height:4.5px;background:#222"></div>
<div class="b" style="left:485.8666666666667px;top:167px;width:1.3px;height:1.5px;background:#333"></div>
<div class="b" style="left:534.2333333333333px;top:167px;width:1.3px;height:1.5px;background:#333"></div>
<div class="b" style="left:582.5999999999999px;top:164.5px;width:1.3px;height:4.5px;background:#222"></div>
<div class="b" style="left:630.9666666666667px;top:167px;width:1.3px;height:1.5px;background:#333"></div>
<div class="b" style="left:679.3333333333333px;top:167px;width:1.3px;height:1.5px;background:#333"></div>
<div class="b" style="left:727.6999999999999px;top:164.5px;width:1.3px;height:4.5px;background:#222"></div>
<div class="b" style="left:776.0666666666666px;top:167px;width:1.3px;height:1.5px;background:#333"></div>
<div class="b" style="left:824.4333333333333px;top:167px;width:1.3px;height:1.5px;background:#333"></div>
<div class="b" style="left:872.8px;top:164.5px;width:1.3px;height:4.5px;background:#222"></div>
<div class="b" style="left:921.1666666666666px;top:167px;width:1.3px;height:1.5px;background:#333"></div>
<div class="b" style="left:969.5333333333332px;top:167px;width:1.3px;height:1.5px;background:#333"></div>
<div class="b" style="left:1017.8999999999999px;top:164.5px;width:1.3px;height:4.5px;background:#222"></div>
<div class="b" style="left:0px;top:171px;width:1024px;height:2px;background:#333"></div>
<div class="b" style="left:4px;top:177px;width:1020px;height:326px;background:#2c2c2c"></div>
<div class="b" style="left:5px;top:178px;width:105.5px;height:323px;background:#c9c9d7"></div>
<div class="b" style="left:111px;top:178px;width:34.5px;height:323px;background:#c9c9d7"></div>
<div class="b" style="left:145.5px;top:178px;width:878.5px;height:158px;background:#9696ac"></div>
<div class="b" style="left:145.5px;top:335.5px;width:878.5px;height:8.5px;background:#a8a8a8;border-top:1.5px solid #333;border-bottom:1.5px solid #333"></div>
<div class="b" style="left:112px;top:336px;width:33px;height:1px;background:#a8a8b0"></div>
<div class="b" style="left:112px;top:343px;width:33px;height:1.5px;background:#f4f4f8"></div>
<div class="b" style="left:145.5px;top:344px;width:878.5px;height:157px;background:#9696ac"></div>
<div class="b" style="left:5px;top:178px;width:17px;height:16px;background:#c9c9d7;border-right:1px solid #888;border-bottom:1px solid #888"></div>
<svg style="left:8px;top:180px" width="12" height="12"><path d="M2 2 L10 10 M10 2 L2 10" stroke="#111" stroke-width="1.7"/></svg>
<div class="b" style="left:22.5px;top:178px;width:88px;height:16px;background:#c9c9d7;border-left:1px solid #fff;border-bottom:1px solid #777"></div>
<div class="t" style="left:26px;top:180px;font-size:12px;line-height:12px;color:#223;font-weight:normal;">I Hate You I</div>
<svg style="left:93px;top:182px" width="14" height="8"><path d="M0.5 0.5 H13 L6.8 7Z" fill="#111"/></svg>
<div class="t" style="left:8px;top:199px;font-size:12px;line-height:12px;color:#222;font-weight:normal;">Stereo, 44100Hz</div>
<div class="t" style="left:8px;top:217px;font-size:12px;line-height:12px;color:#222;font-weight:normal;">32-bit float</div>
<div class="b" style="left:5px;top:233px;width:52px;height:17px;border-top:1px solid #eee;border-left:1px solid #eee;border-right:1px solid #888;border-bottom:1px solid #888"></div>
<div class="b" style="left:58px;top:233px;width:52.5px;height:17px;border-top:1px solid #eee;border-left:1px solid #eee;border-right:1px solid #888;border-bottom:1px solid #888"></div>
<div class="t" style="left:18px;top:236px;font-size:12px;line-height:12px;color:#222;font-weight:normal;">Mute</div>
<div class="t" style="left:72px;top:236px;font-size:12px;line-height:12px;color:#222;font-weight:normal;">Solo</div>
<div class="b" style="left:5px;top:250px;width:105.5px;height:1px;background:#888"></div>
<div class="t" style="left:20px;top:254.0px;font-size:11px;line-height:11px;color:#222;font-weight:normal;">&#8211;</div>
<div class="t" style="left:90px;top:254.0px;font-size:11px;line-height:11px;color:#222;font-weight:normal;">+</div>
<div class="b" style="left:20px;top:272.5px;width:78px;height:1px;background:#9a9aa6"></div>
<div class="b" style="left:20px;top:273.5px;width:78px;height:1px;background:#f4f4f8"></div>
<div class="b" style="left:20.7px;top:266.5px;width:1px;height:5px;background:#f8f8fc"></div>
<div class="b" style="left:21.7px;top:266.5px;width:1px;height:5px;background:#a8a8b4"></div>
<div class="b" style="left:28.25px;top:268.5px;width:1px;height:3px;background:#f8f8fc"></div>
<div class="b" style="left:29.25px;top:268.5px;width:1px;height:3px;background:#a8a8b4"></div>
<div class="b" style="left:35.8px;top:268.5px;width:1px;height:3px;background:#f8f8fc"></div>
<div class="b" style="left:36.8px;top:268.5px;width:1px;height:3px;background:#a8a8b4"></div>
<div class="b" style="left:43.349999999999994px;top:268.5px;width:1px;height:3px;background:#f8f8fc"></div>
<div class="b" style="left:44.349999999999994px;top:268.5px;width:1px;height:3px;background:#a8a8b4"></div>
<div class="b" style="left:50.9px;top:268.5px;width:1px;height:3px;background:#f8f8fc"></div>
<div class="b" style="left:51.9px;top:268.5px;width:1px;height:3px;background:#a8a8b4"></div>
<div class="b" style="left:58.45px;top:268.5px;width:1px;height:3px;background:#f8f8fc"></div>
<div class="b" style="left:59.45px;top:268.5px;width:1px;height:3px;background:#a8a8b4"></div>
<div class="b" style="left:66.0px;top:268.5px;width:1px;height:3px;background:#f8f8fc"></div>
<div class="b" style="left:67.0px;top:268.5px;width:1px;height:3px;background:#a8a8b4"></div>
<div class="b" style="left:73.55px;top:268.5px;width:1px;height:3px;background:#f8f8fc"></div>
<div class="b" style="left:74.55px;top:268.5px;width:1px;height:3px;background:#a8a8b4"></div>
<div class="b" style="left:81.1px;top:268.5px;width:1px;height:3px;background:#f8f8fc"></div>
<div class="b" style="left:82.1px;top:268.5px;width:1px;height:3px;background:#a8a8b4"></div>
<div class="b" style="left:88.65px;top:268.5px;width:1px;height:3px;background:#f8f8fc"></div>
<div class="b" style="left:89.65px;top:268.5px;width:1px;height:3px;background:#a8a8b4"></div>
<div class="b" style="left:96.2px;top:266.5px;width:1px;height:5px;background:#f8f8fc"></div>
<div class="b" style="left:97.2px;top:266.5px;width:1px;height:5px;background:#a8a8b4"></div>
<svg style="left:50.5px;top:264.0px" width="13" height="17" viewBox="0 0 13 17"><path d="M1 2.5 Q1 1 2.5 1 H10.5 Q12 1 12 2.5 V10.5 L6.5 15.8 L1 10.5Z" fill="#dfe2f0" stroke="#6c6c74" stroke-width="1"/><path d="M4.5 5 H8.5 M4.5 7.5 H8.5 M4.5 10 H8.5" stroke="#9aa0c0" stroke-width="0.8"/></svg>
<div class="t" style="left:20px;top:287.0px;font-size:11px;line-height:11px;color:#222;font-weight:normal;">L</div>
<div class="t" style="left:90px;top:287.0px;font-size:11px;line-height:11px;color:#222;font-weight:normal;">R</div>
<div class="b" style="left:20px;top:305.5px;width:78px;height:1px;background:#9a9aa6"></div>
<div class="b" style="left:20px;top:306.5px;width:78px;height:1px;background:#f4f4f8"></div>
<div class="b" style="left:20.7px;top:299.5px;width:1px;height:5px;background:#f8f8fc"></div>
<div class="b" style="left:21.7px;top:299.5px;width:1px;height:5px;background:#a8a8b4"></div>
<div class="b" style="left:28.25px;top:301.5px;width:1px;height:3px;background:#f8f8fc"></div>
<div class="b" style="left:29.25px;top:301.5px;width:1px;height:3px;background:#a8a8b4"></div>
<div class="b" style="left:35.8px;top:301.5px;width:1px;height:3px;background:#f8f8fc"></div>
<div class="b" style="left:36.8px;top:301.5px;width:1px;height:3px;background:#a8a8b4"></div>
<div class="b" style="left:43.349999999999994px;top:301.5px;width:1px;height:3px;background:#f8f8fc"></div>
<div class="b" style="left:44.349999999999994px;top:301.5px;width:1px;height:3px;background:#a8a8b4"></div>
<div class="b" style="left:50.9px;top:301.5px;width:1px;height:3px;background:#f8f8fc"></div>
<div class="b" style="left:51.9px;top:301.5px;width:1px;height:3px;background:#a8a8b4"></div>
<div class="b" style="left:58.45px;top:301.5px;width:1px;height:3px;background:#f8f8fc"></div>
<div class="b" style="left:59.45px;top:301.5px;width:1px;height:3px;background:#a8a8b4"></div>
<div class="b" style="left:66.0px;top:301.5px;width:1px;height:3px;background:#f8f8fc"></div>
<div class="b" style="left:67.0px;top:301.5px;width:1px;height:3px;background:#a8a8b4"></div>
<div class="b" style="left:73.55px;top:301.5px;width:1px;height:3px;background:#f8f8fc"></div>
<div class="b" style="left:74.55px;top:301.5px;width:1px;height:3px;background:#a8a8b4"></div>
<div class="b" style="left:81.1px;top:301.5px;width:1px;height:3px;background:#f8f8fc"></div>
<div class="b" style="left:82.1px;top:301.5px;width:1px;height:3px;background:#a8a8b4"></div>
<div class="b" style="left:88.65px;top:301.5px;width:1px;height:3px;background:#f8f8fc"></div>
<div class="b" style="left:89.65px;top:301.5px;width:1px;height:3px;background:#a8a8b4"></div>
<div class="b" style="left:96.2px;top:299.5px;width:1px;height:5px;background:#f8f8fc"></div>
<div class="b" style="left:97.2px;top:299.5px;width:1px;height:5px;background:#a8a8b4"></div>
<svg style="left:50.5px;top:297.0px" width="13" height="17" viewBox="0 0 13 17"><path d="M1 2.5 Q1 1 2.5 1 H10.5 Q12 1 12 2.5 V10.5 L6.5 15.8 L1 10.5Z" fill="#dfe2f0" stroke="#6c6c74" stroke-width="1"/><path d="M4.5 5 H8.5 M4.5 7.5 H8.5 M4.5 10 H8.5" stroke="#9aa0c0" stroke-width="0.8"/></svg>
<div class="b" style="left:26px;top:481.5px;width:67.5px;height:19px;background:#c9c9d7;border-top:1px solid #fff;border-left:1px solid #fff;border-right:1px solid #888;border-bottom:1px solid #888"></div>
<svg style="left:54px;top:487px" width="12" height="8"><path d="M1 7 L6 1.5 L11 7Z" fill="#666" stroke="#222" stroke-width="0.8"/></svg>
<div class="b" style="left:110px;top:178px;width:1px;height:323px;background:#383838"></div>
<div class="b" style="left:111px;top:178px;width:1px;height:323px;background:#6c6c74"></div>
<div class="b" style="left:144.6px;top:178px;width:1px;height:323px;background:#bcbcc6"></div>
<div class="t" style="left:111px;top:179.7px;width:28px;text-align:right;font-size:13px;line-height:13px;font-weight:bold;color:#111">1.0</div>
<div class="t" style="left:111px;top:211.7px;width:28px;text-align:right;font-size:13px;line-height:13px;font-weight:normal;color:#111">0.5</div>
<div class="b" style="left:140px;top:217.7px;width:3px;height:1px;background:#333"></div>
<div class="t" style="left:111px;top:250.2px;width:28px;text-align:right;font-size:13px;line-height:13px;font-weight:bold;color:#111">0.0</div>
<div class="b" style="left:140px;top:256.2px;width:3px;height:1px;background:#333"></div>
<div class="t" style="left:111px;top:290px;width:28px;text-align:right;font-size:13px;line-height:13px;font-weight:normal;color:#111">-0.5</div>
<div class="b" style="left:140px;top:296px;width:3px;height:1px;background:#333"></div>
<div class="t" style="left:111px;top:319.8px;width:28px;text-align:right;font-size:13px;line-height:13px;font-weight:bold;color:#111">-1.0</div>
<div class="t" style="left:111px;top:345.5px;width:28px;text-align:right;font-size:13px;line-height:13px;font-weight:bold;color:#111">1.0</div>
<div class="t" style="left:111px;top:378.0px;width:28px;text-align:right;font-size:13px;line-height:13px;font-weight:normal;color:#111">0.5</div>
<div class="b" style="left:140px;top:384.0px;width:3px;height:1px;background:#333"></div>
<div class="t" style="left:111px;top:416.5px;width:28px;text-align:right;font-size:13px;line-height:13px;font-weight:bold;color:#111">0.0</div>
<div class="b" style="left:140px;top:422.5px;width:3px;height:1px;background:#333"></div>
<div class="t" style="left:111px;top:455.5px;width:28px;text-align:right;font-size:13px;line-height:13px;font-weight:normal;color:#111">-0.5</div>
<div class="b" style="left:140px;top:461.5px;width:3px;height:1px;background:#333"></div>
<div class="t" style="left:111px;top:486.0px;width:28px;text-align:right;font-size:13px;line-height:13px;font-weight:bold;color:#111">-1.0</div>
<svg style="left:0;top:0" width="1024" height="618" shape-rendering="crispEdges">
<path d="M146 256V256h1V256h1V256h1V256h1V256h1V256h1V256h1V256h1V217h1V222h1V226h1V225h1V226h1V234h1V230h1V227h1V234h1V232h1V236h1V243h1V245h1V243h1V247h1V248h1V250h1V243h1V249h1V251h1V247h1V251h1V248h1V253h1V248h1V231h1V231h1V232h1V233h1V236h1V237h1V242h1V237h1V243h1V245h1V248h1V239h1V240h1V243h1V246h1V244h1V245h1V247h1V250h1V251h1V249h1V250h1V253h1V252h1V227h1V227h1V228h1V231h1V232h1V238h1V233h1V232h1V234h1V235h1V236h1V237h1V239h1V239h1V240h1V241h1V243h1V243h1V244h1V246h1V252h1V251h1V246h1V245h1V250h1V242h1V249h1V227h1V228h1V231h1V236h1V230h1V234h1V242h1V239h1V243h1V236h1V240h1V244h1V245h1V234h1V238h1V243h1V235h1V239h1V232h1V244h1V251h1V230h1V234h1V243h1V248h1V206h1V210h1V213h1V223h1V227h1V225h1V222h1V221h1V214h1V238h1V231h1V239h1V233h1V224h1V239h1V235h1V228h1V226h1V236h1V225h1V227h1V239h1V248h1V234h1V212h1V218h1V223h1V211h1V214h1V216h1V225h1V220h1V223h1V231h1V228h1V235h1V227h1V232h1V233h1V220h1V225h1V230h1V222h1V218h1V223h1V217h1V220h1V225h1V225h1V230h1V238h1V227h1V229h1V223h1V229h1V229h1V217h1V229h1V224h1V243h1V235h1V242h1V225h1V219h1V225h1V217h1V226h1V225h1V223h1V207h1V214h1V238h1V208h1V220h1V236h1V222h1V202h1V213h1V215h1V219h1V212h1V215h1V217h1V217h1V233h1V220h1V214h1V218h1V224h1V225h1V223h1V220h1V219h1V225h1V225h1V234h1V230h1V229h1V237h1V236h1V239h1V241h1V245h1V245h1V248h1V250h1V251h1V251h1V252h1V251h1V252h1V252h1V253h1V253h1V253h1V253h1V253h1V253h1V253h1V253h1V253h1V253h1V253h1V248h1V241h1V225h1V178h1V215h1V187h1V186h1V218h1V214h1V187h1V188h1V198h1V207h1V213h1V224h1V199h1V204h1V221h1V223h1V205h1V215h1V202h1V209h1V197h1V197h1V206h1V210h1V215h1V217h1V197h1V184h1V201h1V212h1V196h1V185h1V212h1V202h1V179h1V203h1V214h1V215h1V222h1V184h1V199h1V211h1V205h1V208h1V211h1V223h1V191h1V212h1V217h1V224h1V207h1V193h1V200h1V206h1V189h1V206h1V218h1V218h1V224h1V187h1V209h1V218h1V190h1V201h1V186h1V199h1V200h1V221h1V228h1V191h1V199h1V204h1V216h1V227h1V212h1V199h1V209h1V208h1V192h1V218h1V225h1V196h1V206h1V196h1V211h1V232h1V232h1V192h1V194h1V213h1V200h1V219h1V230h1V206h1V211h1V212h1V203h1V204h1V219h1V217h1V214h1V194h1V202h1V190h1V203h1V205h1V214h1V211h1V206h1V216h1V182h1V193h1V208h1V217h1V226h1V227h1V225h1V231h1V192h1V215h1V214h1V190h1V196h1V200h1V209h1V230h1V219h1V219h1V200h1V215h1V214h1V206h1V195h1V216h1V230h1V230h1V207h1V200h1V203h1V214h1V202h1V209h1V186h1V215h1V231h1V224h1V196h1V201h1V197h1V223h1V209h1V194h1V200h1V213h1V202h1V204h1V201h1V220h1V214h1V217h1V197h1V209h1V221h1V211h1V205h1V220h1V204h1V212h1V200h1V206h1V205h1V231h1V218h1V211h1V212h1V209h1V205h1V199h1V181h1V200h1V186h1V222h1V211h1V217h1V216h1V238h1V224h1V241h1V231h1V237h1V242h1V244h1V244h1V243h1V239h1V239h1V245h1V245h1V241h1V247h1V249h1V248h1V245h1V246h1V247h1V248h1V248h1V249h1V249h1V250h1V251h1V250h1V251h1V249h1V249h1V250h1V251h1V252h1V251h1V252h1V253h1V253h1V253h1V253h1V253h1V253h1V250h1V201h1V242h1V218h1V227h1V231h1V228h1V244h1V237h1V228h1V241h1V224h1V235h1V236h1V215h1V219h1V222h1V239h1V244h1V235h1V243h1V227h1V229h1V240h1V225h1V243h1V236h1V229h1V201h1V224h1V206h1V217h1V236h1V215h1V217h1V223h1V225h1V236h1V229h1V232h1V243h1V232h1V221h1V235h1V244h1V248h1V248h1V226h1V238h1V234h1V237h1V228h1V211h1V201h1V242h1V204h1V205h1V241h1V226h1V241h1V226h1V226h1V233h1V233h1V226h1V242h1V240h1V241h1V234h1V231h1V221h1V234h1V229h1V229h1V242h1V244h1V236h1V232h1V206h1V224h1V229h1V217h1V233h1V224h1V246h1V226h1V241h1V236h1V243h1V248h1V230h1V223h1V226h1V237h1V247h1V242h1V235h1V246h1V239h1V234h1V227h1V236h1V240h1V204h1V229h1V239h1V237h1V238h1V211h1V243h1V239h1V246h1V239h1V249h1V224h1V231h1V232h1V232h1V238h1V241h1V237h1V246h1V245h1V245h1V235h1V235h1V234h1V236h1V225h1V226h1V236h1V217h1V216h1V208h1V237h1V238h1V226h1V220h1V244h1V208h1V244h1V247h1V236h1V233h1V226h1V237h1V241h1V228h1V234h1V237h1V246h1V245h1V238h1V227h1V223h1V212h1V227h1V237h1V217h1V243h1V239h1V245h1V246h1V224h1V230h1V232h1V226h1V237h1V239h1V234h1V233h1V228h1V245h1V244h1V239h1V244h1V235h1V240h1V236h1V230h1V204h1V215h1V242h1V238h1V228h1V240h1V246h1V245h1V216h1V235h1V237h1V227h1V241h1V243h1V245h1V244h1V234h1V235h1V243h1V244h1V236h1V249h1V229h1V235h1V178h1V186h1V194h1V184h1V199h1V178h1V179h1V209h1V183h1V178h1V182h1V207h1V192h1V214h1V197h1V210h1V195h1V201h1V192h1V187h1V202h1V218h1V184h1V200h1V212h1V198h1V196h1V186h1V204h1V219h1V181h1V204h1V186h1V180h1V179h1V206h1V197h1V222h1V189h1V213h1V202h1V217h1V217h1V204h1V212h1V200h1V215h1V216h1V216h1V193h1V204h1V191h1V178h1V201h1V184h1V188h1V215h1V213h1V201h1V205h1V192h1V192h1V197h1V213h1V199h1V207h1V211h1V206h1V196h1V213h1V199h1V195h1V201h1V200h1V215h1V201h1V204h1V209h1V192h1V183h1V195h1V213h1V212h1V182h1V193h1V187h1V212h1V211h1V191h1V201h1V228h1V190h1V211h1V201h1V193h1V199h1V201h1V211h1V193h1V178h1V191h1V199h1V182h1V199h1V178h1V180h1V211h1V184h1V200h1V194h1V197h1V206h1V210h1V195h1V183h1V186h1V190h1V192h1V190h1V203h1V192h1V196h1V206h1V219h1V192h1V206h1V188h1V217h1V199h1V179h1V194h1V190h1V209h1V191h1V189h1V182h1V202h1V213h1V204h1V186h1V178h1V217h1V210h1V198h1V185h1V213h1V213h1V204h1V218h1V198h1V217h1V211h1V204h1V221h1V178h1V191h1V210h1V185h1V203h1V206h1V210h1V201h1V215h1V207h1V191h1V220h1V206h1V200h1V214h1V198h1V213h1V201h1V198h1V204h1V186h1V189h1V195h1V200h1V180h1V195h1V192h1V201h1V190h1V206h1V214h1V223h1V199h1V206h1V195h1V217h1V209h1V194h1V196h1V181h1V199h1V178h1V203h1V215h1V212h1V205h1V220h1V205h1V200h1V191h1V201h1V218h1V213h1V223h1V225h1V221h1V230h1V220h1V233h1V287h-1V286h-1V286h-1V291h-1V291h-1V299h-1V291h-1V287h-1V291h-1V307h-1V313h-1V314h-1V300h-1V323h-1V286h-1V301h-1V304h-1V304h-1V291h-1V314h-1V303h-1V289h-1V321h-1V324h-1V315h-1V323h-1V336h-1V323h-1V297h-1V316h-1V312h-1V327h-1V311h-1V336h-1V328h-1V331h-1V316h-1V303h-1V289h-1V290h-1V313h-1V336h-1V304h-1V309h-1V324h-1V286h-1V313h-1V294h-1V326h-1V308h-1V324h-1V313h-1V335h-1V323h-1V313h-1V324h-1V320h-1V332h-1V325h-1V324h-1V328h-1V309h-1V304h-1V313h-1V291h-1V304h-1V326h-1V293h-1V320h-1V313h-1V295h-1V301h-1V295h-1V307h-1V293h-1V318h-1V323h-1V295h-1V335h-1V313h-1V301h-1V324h-1V311h-1V306h-1V311h-1V336h-1V310h-1V315h-1V299h-1V315h-1V310h-1V299h-1V327h-1V329h-1V336h-1V322h-1V326h-1V316h-1V307h-1V325h-1V317h-1V315h-1V304h-1V312h-1V323h-1V295h-1V323h-1V328h-1V301h-1V305h-1V334h-1V317h-1V314h-1V317h-1V317h-1V316h-1V318h-1V307h-1V287h-1V320h-1V306h-1V312h-1V308h-1V299h-1V296h-1V296h-1V306h-1V309h-1V314h-1V317h-1V309h-1V321h-1V293h-1V299h-1V329h-1V324h-1V328h-1V308h-1V321h-1V317h-1V326h-1V316h-1V319h-1V303h-1V300h-1V332h-1V308h-1V305h-1V311h-1V297h-1V336h-1V329h-1V307h-1V326h-1V330h-1V306h-1V331h-1V330h-1V324h-1V309h-1V308h-1V325h-1V327h-1V317h-1V314h-1V316h-1V308h-1V311h-1V317h-1V297h-1V296h-1V316h-1V329h-1V320h-1V287h-1V303h-1V309h-1V299h-1V303h-1V305h-1V306h-1V311h-1V318h-1V323h-1V336h-1V315h-1V321h-1V316h-1V321h-1V295h-1V312h-1V301h-1V306h-1V329h-1V331h-1V290h-1V305h-1V317h-1V317h-1V311h-1V318h-1V333h-1V304h-1V320h-1V302h-1V328h-1V333h-1V330h-1V317h-1V323h-1V299h-1V329h-1V336h-1V284h-1V282h-1V282h-1V275h-1V289h-1V273h-1V271h-1V283h-1V277h-1V274h-1V286h-1V282h-1V281h-1V281h-1V282h-1V282h-1V289h-1V291h-1V288h-1V279h-1V291h-1V310h-1V305h-1V281h-1V310h-1V279h-1V274h-1V271h-1V269h-1V270h-1V277h-1V285h-1V275h-1V282h-1V272h-1V270h-1V278h-1V286h-1V282h-1V271h-1V266h-1V281h-1V271h-1V294h-1V286h-1V285h-1V291h-1V280h-1V302h-1V288h-1V273h-1V279h-1V277h-1V271h-1V267h-1V275h-1V272h-1V271h-1V272h-1V281h-1V284h-1V283h-1V277h-1V286h-1V309h-1V277h-1V296h-1V280h-1V296h-1V286h-1V287h-1V299h-1V294h-1V302h-1V309h-1V301h-1V271h-1V270h-1V273h-1V275h-1V281h-1V288h-1V289h-1V277h-1V273h-1V279h-1V272h-1V285h-1V279h-1V273h-1V283h-1V279h-1V277h-1V271h-1V298h-1V302h-1V284h-1V294h-1V270h-1V291h-1V311h-1V281h-1V270h-1V273h-1V276h-1V274h-1V275h-1V280h-1V272h-1V292h-1V293h-1V285h-1V291h-1V299h-1V277h-1V275h-1V286h-1V282h-1V294h-1V281h-1V281h-1V290h-1V297h-1V298h-1V283h-1V308h-1V276h-1V274h-1V283h-1V283h-1V275h-1V276h-1V279h-1V290h-1V276h-1V272h-1V283h-1V280h-1V299h-1V286h-1V281h-1V276h-1V292h-1V289h-1V275h-1V300h-1V285h-1V294h-1V301h-1V293h-1V313h-1V313h-1V271h-1V275h-1V280h-1V282h-1V282h-1V269h-1V283h-1V278h-1V289h-1V273h-1V284h-1V279h-1V285h-1V277h-1V280h-1V282h-1V286h-1V277h-1V296h-1V304h-1V271h-1V285h-1V295h-1V310h-1V309h-1V275h-1V283h-1V283h-1V289h-1V276h-1V286h-1V278h-1V278h-1V289h-1V279h-1V288h-1V272h-1V272h-1V280h-1V295h-1V278h-1V287h-1V290h-1V280h-1V272h-1V292h-1V284h-1V287h-1V297h-1V304h-1V311h-1V263h-1V261h-1V262h-1V262h-1V261h-1V262h-1V262h-1V262h-1V263h-1V264h-1V265h-1V263h-1V264h-1V268h-1V264h-1V270h-1V266h-1V264h-1V270h-1V267h-1V265h-1V268h-1V266h-1V266h-1V267h-1V264h-1V264h-1V270h-1V264h-1V267h-1V266h-1V273h-1V275h-1V277h-1V277h-1V270h-1V272h-1V269h-1V281h-1V287h-1V276h-1V286h-1V293h-1V300h-1V305h-1V293h-1V303h-1V294h-1V295h-1V308h-1V301h-1V325h-1V307h-1V306h-1V289h-1V304h-1V310h-1V286h-1V294h-1V315h-1V315h-1V312h-1V303h-1V311h-1V286h-1V295h-1V291h-1V304h-1V299h-1V291h-1V316h-1V323h-1V319h-1V332h-1V321h-1V283h-1V304h-1V332h-1V295h-1V299h-1V308h-1V314h-1V312h-1V310h-1V313h-1V327h-1V287h-1V304h-1V327h-1V290h-1V282h-1V313h-1V288h-1V292h-1V312h-1V322h-1V311h-1V296h-1V318h-1V319h-1V320h-1V294h-1V294h-1V301h-1V310h-1V297h-1V308h-1V316h-1V307h-1V316h-1V326h-1V330h-1V314h-1V290h-1V310h-1V307h-1V297h-1V313h-1V292h-1V319h-1V291h-1V318h-1V319h-1V304h-1V302h-1V296h-1V324h-1V308h-1V296h-1V293h-1V291h-1V290h-1V305h-1V301h-1V311h-1V307h-1V309h-1V333h-1V329h-1V305h-1V301h-1V309h-1V325h-1V323h-1V322h-1V313h-1V324h-1V330h-1V292h-1V294h-1V310h-1V277h-1V276h-1V289h-1V310h-1V310h-1V300h-1V284h-1V312h-1V292h-1V306h-1V324h-1V280h-1V295h-1V302h-1V288h-1V316h-1V324h-1V316h-1V324h-1V312h-1V292h-1V311h-1V296h-1V299h-1V324h-1V291h-1V313h-1V312h-1V321h-1V320h-1V299h-1V296h-1V302h-1V307h-1V303h-1V318h-1V319h-1V318h-1V305h-1V320h-1V304h-1V313h-1V305h-1V319h-1V324h-1V317h-1V290h-1V303h-1V304h-1V323h-1V312h-1V334h-1V314h-1V300h-1V318h-1V310h-1V314h-1V297h-1V312h-1V330h-1V304h-1V299h-1V312h-1V310h-1V323h-1V309h-1V307h-1V293h-1V328h-1V331h-1V323h-1V329h-1V282h-1V302h-1V325h-1V331h-1V283h-1V276h-1V266h-1V261h-1V261h-1V261h-1V261h-1V261h-1V261h-1V261h-1V261h-1V261h-1V261h-1V261h-1V262h-1V262h-1V263h-1V262h-1V263h-1V263h-1V264h-1V267h-1V267h-1V269h-1V268h-1V274h-1V281h-1V273h-1V278h-1V276h-1V280h-1V285h-1V290h-1V293h-1V294h-1V297h-1V295h-1V297h-1V291h-1V289h-1V300h-1V301h-1V295h-1V307h-1V285h-1V299h-1V306h-1V301h-1V310h-1V312h-1V276h-1V288h-1V288h-1V278h-1V282h-1V289h-1V310h-1V279h-1V273h-1V289h-1V280h-1V289h-1V282h-1V294h-1V296h-1V297h-1V285h-1V288h-1V281h-1V271h-1V289h-1V281h-1V288h-1V285h-1V274h-1V283h-1V290h-1V286h-1V274h-1V288h-1V281h-1V279h-1V279h-1V279h-1V287h-1V292h-1V294h-1V301h-1V278h-1V288h-1V288h-1V288h-1V284h-1V277h-1V282h-1V291h-1V298h-1V293h-1V298h-1V290h-1V299h-1V301h-1V266h-1V270h-1V287h-1V281h-1V281h-1V281h-1V283h-1V298h-1V297h-1V291h-1V292h-1V287h-1V289h-1V286h-1V293h-1V302h-1V279h-1V278h-1V287h-1V298h-1V299h-1V286h-1V295h-1V305h-1V271h-1V268h-1V290h-1V289h-1V269h-1V287h-1V286h-1V284h-1V270h-1V285h-1V281h-1V273h-1V270h-1V276h-1V277h-1V276h-1V280h-1V282h-1V279h-1V279h-1V287h-1V283h-1V280h-1V284h-1V289h-1V263h-1V263h-1V263h-1V263h-1V262h-1V263h-1V265h-1V268h-1V270h-1V271h-1V271h-1V273h-1V274h-1V274h-1V276h-1V277h-1V278h-1V279h-1V276h-1V279h-1V281h-1V283h-1V280h-1V283h-1V275h-1V285h-1V288h-1V262h-1V263h-1V263h-1V266h-1V264h-1V268h-1V267h-1V267h-1V267h-1V272h-1V274h-1V273h-1V268h-1V272h-1V277h-1V268h-1V276h-1V278h-1V274h-1V281h-1V280h-1V276h-1V271h-1V283h-1V264h-1V262h-1V263h-1V265h-1V265h-1V264h-1V267h-1V267h-1V272h-1V269h-1V270h-1V270h-1V267h-1V275h-1V280h-1V278h-1V275h-1V280h-1V275h-1V276h-1V283h-1V287h-1V291h-1V285h-1V297h-1V258h-1V258h-1V258h-1V258h-1V258h-1V258h-1V258h-1V258h-1Z" fill="#3232c8"/>
<path d="M146 256V256h1V256h1V256h1V256h1V256h1V256h1V256h1V256h1V245h1V246h1V246h1V246h1V247h1V248h1V248h1V248h1V249h1V249h1V250h1V251h1V249h1V250h1V251h1V251h1V252h1V252h1V251h1V252h1V253h1V253h1V254h1V254h1V252h1V249h1V249h1V249h1V249h1V249h1V249h1V250h1V250h1V251h1V251h1V251h1V251h1V252h1V252h1V251h1V252h1V252h1V252h1V253h1V253h1V253h1V254h1V254h1V255h1V250h1V250h1V251h1V251h1V251h1V251h1V252h1V250h1V250h1V250h1V251h1V252h1V251h1V252h1V252h1V252h1V252h1V253h1V253h1V253h1V253h1V253h1V253h1V253h1V252h1V250h1V250h1V251h1V251h1V251h1V251h1V251h1V251h1V251h1V252h1V252h1V252h1V252h1V252h1V252h1V252h1V253h1V252h1V252h1V252h1V252h1V253h1V253h1V252h1V253h1V253h1V253h1V249h1V245h1V245h1V246h1V247h1V247h1V247h1V248h1V247h1V248h1V249h1V249h1V249h1V249h1V249h1V250h1V250h1V251h1V248h1V249h1V249h1V250h1V250h1V250h1V248h1V248h1V247h1V248h1V249h1V248h1V249h1V248h1V249h1V248h1V249h1V247h1V248h1V247h1V248h1V249h1V248h1V249h1V249h1V249h1V249h1V250h1V249h1V250h1V248h1V248h1V248h1V249h1V249h1V249h1V248h1V249h1V249h1V249h1V249h1V249h1V250h1V249h1V250h1V250h1V251h1V250h1V250h1V251h1V250h1V251h1V250h1V249h1V250h1V250h1V251h1V250h1V249h1V249h1V248h1V249h1V249h1V249h1V249h1V250h1V246h1V248h1V248h1V248h1V249h1V249h1V250h1V249h1V249h1V249h1V250h1V250h1V251h1V250h1V251h1V251h1V252h1V252h1V253h1V253h1V254h1V254h1V254h1V254h1V254h1V254h1V254h1V254h1V254h1V254h1V254h1V254h1V254h1V254h1V254h1V254h1V254h1V254h1V254h1V253h1V250h1V246h1V244h1V238h1V238h1V238h1V238h1V240h1V235h1V236h1V236h1V236h1V238h1V239h1V240h1V241h1V241h1V242h1V243h1V243h1V239h1V238h1V239h1V240h1V240h1V242h1V241h1V241h1V232h1V235h1V233h1V232h1V233h1V234h1V237h1V239h1V239h1V239h1V242h1V241h1V242h1V243h1V243h1V244h1V242h1V243h1V245h1V245h1V239h1V240h1V241h1V241h1V241h1V231h1V233h1V236h1V236h1V236h1V237h1V239h1V239h1V240h1V240h1V242h1V241h1V243h1V242h1V242h1V244h1V244h1V244h1V245h1V243h1V244h1V242h1V242h1V243h1V242h1V234h1V236h1V235h1V236h1V238h1V237h1V240h1V236h1V239h1V239h1V240h1V241h1V241h1V243h1V244h1V243h1V244h1V245h1V244h1V244h1V245h1V245h1V245h1V245h1V245h1V242h1V232h1V235h1V235h1V238h1V237h1V240h1V239h1V241h1V241h1V240h1V242h1V242h1V242h1V242h1V241h1V242h1V243h1V244h1V244h1V245h1V245h1V245h1V245h1V245h1V246h1V239h1V240h1V241h1V239h1V236h1V238h1V237h1V239h1V239h1V240h1V240h1V241h1V241h1V242h1V243h1V240h1V241h1V242h1V242h1V243h1V243h1V239h1V241h1V241h1V240h1V230h1V233h1V234h1V237h1V237h1V239h1V235h1V237h1V236h1V239h1V239h1V239h1V241h1V240h1V241h1V243h1V242h1V243h1V243h1V243h1V244h1V243h1V245h1V243h1V243h1V233h1V236h1V237h1V239h1V240h1V242h1V239h1V242h1V243h1V246h1V247h1V248h1V249h1V250h1V250h1V249h1V250h1V250h1V250h1V251h1V252h1V252h1V252h1V252h1V251h1V251h1V248h1V249h1V250h1V249h1V251h1V251h1V251h1V252h1V252h1V252h1V253h1V252h1V253h1V253h1V253h1V253h1V254h1V254h1V254h1V254h1V254h1V254h1V254h1V251h1V250h1V245h1V246h1V246h1V248h1V247h1V248h1V248h1V248h1V250h1V250h1V250h1V249h1V249h1V250h1V250h1V251h1V251h1V251h1V251h1V251h1V251h1V251h1V251h1V251h1V251h1V247h1V248h1V249h1V250h1V249h1V250h1V250h1V250h1V250h1V250h1V250h1V249h1V250h1V250h1V250h1V250h1V251h1V251h1V251h1V251h1V252h1V252h1V251h1V251h1V251h1V248h1V248h1V248h1V247h1V246h1V248h1V247h1V249h1V249h1V249h1V248h1V249h1V249h1V249h1V249h1V250h1V250h1V250h1V251h1V251h1V251h1V251h1V250h1V250h1V250h1V250h1V246h1V247h1V248h1V248h1V248h1V249h1V249h1V250h1V248h1V249h1V249h1V249h1V249h1V251h1V250h1V250h1V250h1V250h1V250h1V250h1V250h1V250h1V251h1V251h1V251h1V247h1V248h1V249h1V249h1V248h1V249h1V250h1V250h1V248h1V249h1V250h1V249h1V250h1V250h1V250h1V251h1V251h1V251h1V251h1V250h1V250h1V252h1V251h1V251h1V252h1V248h1V248h1V249h1V249h1V250h1V249h1V250h1V251h1V250h1V250h1V251h1V248h1V249h1V249h1V250h1V250h1V250h1V251h1V250h1V251h1V251h1V251h1V252h1V252h1V251h1V249h1V246h1V246h1V247h1V248h1V248h1V249h1V249h1V247h1V249h1V248h1V249h1V249h1V249h1V250h1V249h1V248h1V249h1V249h1V250h1V250h1V251h1V251h1V250h1V251h1V251h1V247h1V248h1V248h1V249h1V249h1V249h1V249h1V249h1V250h1V250h1V250h1V251h1V251h1V251h1V251h1V251h1V251h1V251h1V251h1V251h1V252h1V251h1V252h1V252h1V251h1V228h1V232h1V232h1V234h1V236h1V228h1V230h1V233h1V233h1V237h1V237h1V239h1V239h1V239h1V239h1V241h1V241h1V242h1V240h1V242h1V243h1V243h1V241h1V242h1V240h1V230h1V232h1V235h1V234h1V238h1V237h1V237h1V233h1V235h1V237h1V237h1V237h1V237h1V240h1V240h1V240h1V241h1V242h1V240h1V239h1V241h1V240h1V240h1V243h1V242h1V231h1V234h1V235h1V234h1V237h1V230h1V234h1V235h1V236h1V237h1V237h1V237h1V239h1V240h1V241h1V240h1V241h1V241h1V242h1V242h1V242h1V244h1V244h1V243h1V243h1V244h1V235h1V236h1V237h1V238h1V239h1V236h1V237h1V237h1V238h1V239h1V239h1V240h1V241h1V241h1V241h1V241h1V242h1V242h1V242h1V240h1V239h1V239h1V241h1V242h1V240h1V232h1V234h1V233h1V235h1V237h1V237h1V236h1V235h1V237h1V236h1V239h1V239h1V240h1V241h1V241h1V241h1V240h1V242h1V241h1V241h1V242h1V242h1V242h1V244h1V243h1V226h1V231h1V230h1V232h1V234h1V234h1V236h1V236h1V237h1V238h1V239h1V240h1V238h1V239h1V239h1V240h1V241h1V240h1V241h1V243h1V242h1V242h1V243h1V242h1V241h1V232h1V234h1V235h1V237h1V237h1V238h1V231h1V235h1V234h1V237h1V237h1V238h1V239h1V238h1V238h1V239h1V239h1V241h1V242h1V241h1V242h1V242h1V243h1V242h1V240h1V240h1V230h1V231h1V231h1V236h1V236h1V234h1V237h1V238h1V237h1V239h1V238h1V240h1V239h1V240h1V241h1V241h1V242h1V242h1V241h1V242h1V243h1V243h1V239h1V240h1V242h1V231h1V233h1V235h1V237h1V238h1V240h1V241h1V242h1V243h1V242h1V242h1V269h-1V272h-1V273h-1V273h-1V274h-1V278h-1V273h-1V273h-1V275h-1V278h-1V278h-1V271h-1V270h-1V272h-1V272h-1V273h-1V273h-1V275h-1V275h-1V277h-1V276h-1V278h-1V279h-1V275h-1V276h-1V275h-1V277h-1V278h-1V277h-1V281h-1V281h-1V280h-1V282h-1V282h-1V286h-1V288h-1V277h-1V275h-1V271h-1V272h-1V273h-1V273h-1V272h-1V274h-1V274h-1V274h-1V273h-1V275h-1V276h-1V277h-1V278h-1V277h-1V279h-1V280h-1V281h-1V276h-1V278h-1V279h-1V278h-1V279h-1V280h-1V283h-1V272h-1V272h-1V272h-1V271h-1V271h-1V272h-1V273h-1V273h-1V273h-1V274h-1V273h-1V275h-1V273h-1V275h-1V277h-1V276h-1V279h-1V280h-1V278h-1V281h-1V278h-1V279h-1V279h-1V282h-1V282h-1V273h-1V274h-1V274h-1V271h-1V273h-1V273h-1V271h-1V271h-1V273h-1V273h-1V274h-1V276h-1V277h-1V276h-1V276h-1V277h-1V277h-1V279h-1V280h-1V279h-1V283h-1V284h-1V277h-1V278h-1V281h-1V271h-1V271h-1V272h-1V271h-1V272h-1V273h-1V273h-1V273h-1V273h-1V274h-1V275h-1V274h-1V275h-1V276h-1V275h-1V275h-1V275h-1V277h-1V278h-1V278h-1V279h-1V277h-1V280h-1V279h-1V282h-1V271h-1V271h-1V272h-1V273h-1V272h-1V273h-1V273h-1V274h-1V274h-1V275h-1V275h-1V276h-1V277h-1V275h-1V276h-1V276h-1V280h-1V279h-1V279h-1V282h-1V284h-1V285h-1V279h-1V279h-1V283h-1V282h-1V273h-1V273h-1V274h-1V274h-1V274h-1V274h-1V277h-1V277h-1V276h-1V278h-1V275h-1V274h-1V276h-1V278h-1V278h-1V280h-1V278h-1V281h-1V283h-1V279h-1V280h-1V281h-1V282h-1V287h-1V290h-1V270h-1V270h-1V272h-1V272h-1V272h-1V272h-1V272h-1V271h-1V273h-1V273h-1V273h-1V275h-1V276h-1V275h-1V276h-1V277h-1V279h-1V278h-1V280h-1V284h-1V285h-1V278h-1V278h-1V281h-1V282h-1V263h-1V263h-1V262h-1V262h-1V263h-1V263h-1V264h-1V263h-1V263h-1V263h-1V264h-1V264h-1V264h-1V265h-1V264h-1V265h-1V265h-1V266h-1V266h-1V267h-1V267h-1V265h-1V266h-1V265h-1V267h-1V263h-1V264h-1V263h-1V264h-1V263h-1V264h-1V264h-1V265h-1V265h-1V265h-1V266h-1V262h-1V263h-1V264h-1V263h-1V263h-1V264h-1V264h-1V265h-1V264h-1V264h-1V266h-1V265h-1V266h-1V267h-1V266h-1V262h-1V262h-1V262h-1V263h-1V263h-1V263h-1V263h-1V263h-1V263h-1V263h-1V264h-1V265h-1V265h-1V265h-1V265h-1V265h-1V266h-1V266h-1V267h-1V267h-1V266h-1V266h-1V265h-1V267h-1V267h-1V263h-1V263h-1V263h-1V263h-1V264h-1V263h-1V263h-1V265h-1V264h-1V265h-1V264h-1V266h-1V264h-1V264h-1V265h-1V264h-1V264h-1V265h-1V265h-1V266h-1V266h-1V268h-1V266h-1V266h-1V267h-1V263h-1V263h-1V263h-1V263h-1V263h-1V264h-1V264h-1V264h-1V265h-1V265h-1V265h-1V265h-1V264h-1V265h-1V264h-1V265h-1V266h-1V266h-1V266h-1V267h-1V265h-1V266h-1V266h-1V267h-1V266h-1V263h-1V263h-1V264h-1V264h-1V264h-1V264h-1V265h-1V264h-1V264h-1V263h-1V264h-1V264h-1V265h-1V265h-1V265h-1V265h-1V266h-1V266h-1V267h-1V267h-1V267h-1V265h-1V265h-1V266h-1V266h-1V266h-1V263h-1V262h-1V263h-1V263h-1V263h-1V264h-1V263h-1V263h-1V263h-1V264h-1V264h-1V264h-1V264h-1V265h-1V265h-1V265h-1V265h-1V266h-1V267h-1V266h-1V268h-1V269h-1V268h-1V266h-1V266h-1V263h-1V263h-1V263h-1V263h-1V263h-1V263h-1V264h-1V264h-1V264h-1V263h-1V263h-1V263h-1V264h-1V265h-1V265h-1V265h-1V266h-1V264h-1V265h-1V264h-1V265h-1V265h-1V266h-1V266h-1V267h-1V264h-1V261h-1V260h-1V260h-1V260h-1V260h-1V260h-1V260h-1V260h-1V261h-1V261h-1V261h-1V262h-1V261h-1V262h-1V263h-1V262h-1V263h-1V263h-1V263h-1V263h-1V263h-1V264h-1V265h-1V265h-1V262h-1V262h-1V263h-1V262h-1V263h-1V263h-1V264h-1V264h-1V265h-1V265h-1V265h-1V264h-1V265h-1V265h-1V266h-1V267h-1V269h-1V271h-1V272h-1V272h-1V273h-1V276h-1V280h-1V283h-1V284h-1V286h-1V271h-1V271h-1V271h-1V271h-1V272h-1V273h-1V274h-1V274h-1V274h-1V275h-1V270h-1V272h-1V272h-1V272h-1V274h-1V274h-1V276h-1V275h-1V276h-1V276h-1V276h-1V277h-1V279h-1V281h-1V280h-1V271h-1V272h-1V272h-1V273h-1V275h-1V274h-1V269h-1V271h-1V270h-1V272h-1V271h-1V270h-1V272h-1V272h-1V272h-1V274h-1V275h-1V274h-1V276h-1V275h-1V277h-1V279h-1V279h-1V279h-1V279h-1V272h-1V271h-1V273h-1V273h-1V274h-1V274h-1V274h-1V274h-1V276h-1V270h-1V272h-1V271h-1V271h-1V271h-1V272h-1V273h-1V275h-1V274h-1V274h-1V277h-1V278h-1V276h-1V278h-1V281h-1V280h-1V271h-1V271h-1V271h-1V273h-1V274h-1V274h-1V274h-1V275h-1V275h-1V271h-1V271h-1V270h-1V271h-1V272h-1V273h-1V274h-1V274h-1V275h-1V273h-1V274h-1V275h-1V277h-1V278h-1V280h-1V282h-1V282h-1V273h-1V269h-1V270h-1V271h-1V271h-1V270h-1V270h-1V271h-1V272h-1V272h-1V273h-1V273h-1V274h-1V275h-1V272h-1V272h-1V272h-1V272h-1V274h-1V274h-1V276h-1V275h-1V278h-1V277h-1V278h-1V271h-1V272h-1V272h-1V271h-1V272h-1V270h-1V270h-1V270h-1V270h-1V270h-1V270h-1V272h-1V272h-1V272h-1V271h-1V273h-1V274h-1V274h-1V273h-1V275h-1V274h-1V278h-1V275h-1V276h-1V277h-1V269h-1V269h-1V270h-1V270h-1V270h-1V271h-1V270h-1V271h-1V272h-1V271h-1V272h-1V273h-1V272h-1V273h-1V272h-1V273h-1V272h-1V273h-1V273h-1V274h-1V274h-1V276h-1V278h-1V277h-1V278h-1V271h-1V268h-1V265h-1V262h-1V260h-1V260h-1V260h-1V260h-1V260h-1V260h-1V260h-1V260h-1V260h-1V260h-1V260h-1V260h-1V260h-1V260h-1V260h-1V260h-1V260h-1V260h-1V261h-1V262h-1V262h-1V262h-1V262h-1V262h-1V263h-1V263h-1V263h-1V263h-1V263h-1V263h-1V263h-1V264h-1V264h-1V265h-1V265h-1V265h-1V266h-1V264h-1V264h-1V264h-1V265h-1V264h-1V266h-1V265h-1V265h-1V266h-1V267h-1V265h-1V264h-1V263h-1V263h-1V264h-1V263h-1V264h-1V264h-1V264h-1V264h-1V264h-1V265h-1V265h-1V264h-1V264h-1V265h-1V264h-1V265h-1V264h-1V264h-1V264h-1V265h-1V265h-1V265h-1V264h-1V265h-1V265h-1V265h-1V265h-1V266h-1V264h-1V264h-1V265h-1V265h-1V265h-1V265h-1V266h-1V265h-1V265h-1V266h-1V265h-1V266h-1V266h-1V265h-1V267h-1V266h-1V266h-1V267h-1V265h-1V265h-1V265h-1V265h-1V263h-1V263h-1V263h-1V264h-1V264h-1V264h-1V264h-1V264h-1V266h-1V266h-1V266h-1V264h-1V265h-1V265h-1V264h-1V265h-1V265h-1V265h-1V267h-1V266h-1V266h-1V267h-1V268h-1V266h-1V262h-1V262h-1V262h-1V262h-1V262h-1V262h-1V262h-1V262h-1V263h-1V263h-1V263h-1V263h-1V264h-1V263h-1V264h-1V264h-1V264h-1V264h-1V264h-1V264h-1V264h-1V264h-1V262h-1V262h-1V263h-1V262h-1V262h-1V262h-1V262h-1V261h-1V261h-1V261h-1V260h-1V261h-1V261h-1V261h-1V261h-1V261h-1V261h-1V261h-1V262h-1V262h-1V262h-1V262h-1V262h-1V263h-1V263h-1V263h-1V264h-1V263h-1V263h-1V264h-1V259h-1V260h-1V260h-1V260h-1V261h-1V261h-1V261h-1V261h-1V262h-1V262h-1V263h-1V262h-1V263h-1V264h-1V265h-1V263h-1V264h-1V264h-1V264h-1V265h-1V265h-1V264h-1V264h-1V264h-1V262h-1V260h-1V260h-1V260h-1V261h-1V261h-1V262h-1V261h-1V262h-1V263h-1V263h-1V263h-1V264h-1V264h-1V265h-1V266h-1V266h-1V268h-1V266h-1V266h-1V266h-1V268h-1V267h-1V267h-1V269h-1V258h-1V258h-1V258h-1V258h-1V258h-1V258h-1V258h-1V258h-1Z" fill="#6464dc"/>
<path d="M146 422V422h1V422h1V422h1V422h1V422h1V422h1V422h1V422h1V414h1V411h1V407h1V405h1V406h1V409h1V405h1V399h1V396h1V401h1V406h1V408h1V403h1V406h1V410h1V413h1V414h1V407h1V410h1V415h1V414h1V415h1V416h1V418h1V415h1V387h1V400h1V396h1V396h1V400h1V404h1V398h1V409h1V403h1V406h1V407h1V405h1V411h1V406h1V409h1V407h1V409h1V412h1V409h1V415h1V412h1V414h1V416h1V418h1V405h1V370h1V400h1V398h1V395h1V396h1V384h1V401h1V401h1V386h1V404h1V410h1V412h1V401h1V408h1V406h1V406h1V404h1V407h1V403h1V412h1V405h1V412h1V409h1V411h1V416h1V414h1V400h1V374h1V388h1V397h1V383h1V389h1V398h1V403h1V396h1V389h1V393h1V411h1V394h1V405h1V390h1V388h1V399h1V408h1V407h1V401h1V412h1V407h1V414h1V404h1V416h1V355h1V380h1V370h1V385h1V374h1V394h1V400h1V389h1V385h1V389h1V394h1V396h1V411h1V377h1V374h1V395h1V392h1V392h1V392h1V408h1V394h1V406h1V408h1V401h1V412h1V363h1V397h1V379h1V389h1V394h1V404h1V383h1V380h1V394h1V372h1V398h1V369h1V370h1V404h1V399h1V407h1V380h1V398h1V394h1V385h1V397h1V400h1V397h1V405h1V406h1V396h1V408h1V391h1V388h1V404h1V407h1V399h1V393h1V399h1V386h1V407h1V380h1V389h1V410h1V389h1V378h1V386h1V392h1V393h1V385h1V374h1V395h1V404h1V392h1V391h1V391h1V352h1V396h1V365h1V390h1V389h1V390h1V382h1V395h1V383h1V396h1V385h1V393h1V397h1V398h1V400h1V406h1V399h1V403h1V402h1V409h1V402h1V411h1V410h1V408h1V416h1V408h1V408h1V414h1V415h1V416h1V416h1V416h1V417h1V417h1V417h1V418h1V418h1V418h1V418h1V419h1V418h1V418h1V419h1V419h1V419h1V419h1V419h1V411h1V411h1V385h1V346h1V350h1V368h1V372h1V350h1V355h1V373h1V372h1V359h1V371h1V360h1V380h1V396h1V392h1V369h1V372h1V386h1V378h1V366h1V368h1V364h1V373h1V365h1V396h1V378h1V371h1V347h1V387h1V366h1V377h1V352h1V368h1V374h1V387h1V391h1V363h1V375h1V370h1V388h1V365h1V378h1V369h1V387h1V378h1V367h1V378h1V349h1V358h1V383h1V397h1V374h1V351h1V360h1V362h1V355h1V377h1V390h1V366h1V374h1V382h1V351h1V377h1V371h1V394h1V375h1V381h1V374h1V383h1V381h1V388h1V361h1V356h1V382h1V362h1V380h1V354h1V347h1V368h1V370h1V363h1V349h1V366h1V359h1V365h1V369h1V382h1V370h1V358h1V373h1V376h1V378h1V363h1V366h1V356h1V382h1V375h1V384h1V386h1V377h1V395h1V378h1V381h1V361h1V374h1V356h1V360h1V384h1V395h1V372h1V379h1V383h1V390h1V392h1V386h1V360h1V382h1V376h1V394h1V398h1V386h1V377h1V380h1V371h1V377h1V352h1V381h1V364h1V382h1V371h1V373h1V387h1V383h1V348h1V366h1V383h1V374h1V368h1V375h1V365h1V380h1V359h1V381h1V392h1V384h1V364h1V372h1V368h1V376h1V399h1V382h1V353h1V390h1V360h1V364h1V375h1V370h1V376h1V375h1V371h1V381h1V347h1V370h1V365h1V368h1V380h1V383h1V383h1V362h1V370h1V383h1V367h1V381h1V365h1V373h1V369h1V388h1V392h1V360h1V369h1V362h1V363h1V386h1V385h1V385h1V386h1V393h1V393h1V402h1V399h1V406h1V401h1V407h1V407h1V404h1V412h1V403h1V406h1V412h1V408h1V409h1V412h1V412h1V413h1V403h1V404h1V410h1V411h1V415h1V416h1V412h1V416h1V416h1V414h1V416h1V416h1V416h1V417h1V416h1V417h1V417h1V418h1V418h1V418h1V419h1V418h1V418h1V417h1V363h1V386h1V370h1V403h1V398h1V400h1V387h1V405h1V404h1V388h1V402h1V400h1V400h1V407h1V387h1V401h1V405h1V394h1V404h1V408h1V389h1V391h1V399h1V398h1V395h1V401h1V387h1V371h1V407h1V396h1V407h1V394h1V392h1V377h1V378h1V400h1V384h1V399h1V399h1V404h1V403h1V410h1V397h1V402h1V403h1V403h1V405h1V411h1V404h1V410h1V402h1V376h1V393h1V372h1V371h1V376h1V391h1V403h1V406h1V405h1V383h1V397h1V398h1V408h1V389h1V389h1V398h1V390h1V404h1V400h1V397h1V402h1V394h1V406h1V408h1V404h1V413h1V351h1V405h1V363h1V407h1V399h1V389h1V396h1V403h1V407h1V396h1V380h1V385h1V404h1V388h1V405h1V394h1V399h1V391h1V395h1V398h1V408h1V401h1V403h1V400h1V408h1V356h1V389h1V365h1V404h1V381h1V403h1V407h1V395h1V385h1V398h1V391h1V411h1V397h1V395h1V405h1V407h1V396h1V408h1V405h1V407h1V391h1V404h1V403h1V407h1V411h1V391h1V395h1V393h1V379h1V395h1V387h1V399h1V393h1V396h1V412h1V394h1V364h1V400h1V373h1V400h1V398h1V395h1V402h1V392h1V405h1V402h1V403h1V391h1V394h1V402h1V403h1V379h1V394h1V381h1V408h1V408h1V391h1V392h1V394h1V403h1V406h1V411h1V408h1V395h1V410h1V391h1V394h1V390h1V391h1V396h1V398h1V402h1V410h1V411h1V410h1V411h1V395h1V382h1V408h1V374h1V388h1V402h1V402h1V401h1V395h1V389h1V405h1V398h1V407h1V385h1V402h1V394h1V400h1V412h1V406h1V402h1V407h1V407h1V395h1V401h1V405h1V345h1V347h1V375h1V356h1V365h1V365h1V359h1V369h1V368h1V353h1V356h1V359h1V374h1V365h1V376h1V364h1V374h1V368h1V373h1V355h1V365h1V370h1V352h1V358h1V378h1V354h1V372h1V348h1V354h1V344h1V379h1V344h1V350h1V362h1V348h1V376h1V370h1V382h1V359h1V384h1V375h1V361h1V365h1V357h1V359h1V360h1V381h1V360h1V370h1V382h1V353h1V349h1V376h1V358h1V378h1V391h1V358h1V386h1V370h1V365h1V372h1V369h1V358h1V376h1V366h1V386h1V370h1V358h1V366h1V364h1V374h1V371h1V370h1V360h1V371h1V368h1V369h1V384h1V361h1V346h1V363h1V354h1V366h1V363h1V354h1V370h1V361h1V378h1V361h1V365h1V357h1V354h1V367h1V366h1V373h1V370h1V356h1V382h1V363h1V366h1V361h1V367h1V347h1V381h1V366h1V344h1V344h1V366h1V358h1V352h1V380h1V362h1V365h1V378h1V380h1V374h1V373h1V374h1V366h1V378h1V356h1V366h1V373h1V378h1V364h1V359h1V359h1V365h1V349h1V352h1V363h1V349h1V372h1V374h1V361h1V378h1V366h1V357h1V386h1V364h1V359h1V392h1V374h1V396h1V365h1V358h1V369h1V355h1V361h1V358h1V373h1V363h1V363h1V356h1V370h1V360h1V375h1V348h1V359h1V355h1V361h1V382h1V356h1V345h1V350h1V367h1V358h1V373h1V370h1V364h1V371h1V351h1V376h1V369h1V366h1V353h1V372h1V367h1V363h1V357h1V355h1V373h1V373h1V383h1V368h1V355h1V376h1V359h1V345h1V354h1V374h1V376h1V367h1V387h1V363h1V353h1V356h1V360h1V385h1V396h1V379h1V375h1V383h1V377h1V381h1V372h1V375h1V389h1V399h1V371h1V382h1V398h1V398h1V443h-1V456h-1V457h-1V461h-1V466h-1V457h-1V459h-1V470h-1V473h-1V478h-1V479h-1V472h-1V467h-1V476h-1V473h-1V494h-1V488h-1V475h-1V496h-1V460h-1V491h-1V494h-1V487h-1V489h-1V491h-1V477h-1V481h-1V480h-1V487h-1V483h-1V466h-1V489h-1V487h-1V481h-1V474h-1V472h-1V457h-1V465h-1V463h-1V473h-1V477h-1V499h-1V469h-1V475h-1V484h-1V494h-1V474h-1V468h-1V459h-1V462h-1V485h-1V484h-1V500h-1V489h-1V492h-1V473h-1V496h-1V477h-1V488h-1V495h-1V481h-1V479h-1V469h-1V474h-1V466h-1V488h-1V456h-1V472h-1V465h-1V480h-1V468h-1V472h-1V482h-1V481h-1V475h-1V472h-1V494h-1V497h-1V470h-1V486h-1V476h-1V482h-1V470h-1V482h-1V473h-1V500h-1V499h-1V497h-1V470h-1V482h-1V466h-1V484h-1V458h-1V465h-1V457h-1V474h-1V463h-1V471h-1V492h-1V472h-1V479h-1V463h-1V500h-1V499h-1V476h-1V486h-1V462h-1V484h-1V464h-1V471h-1V489h-1V497h-1V454h-1V484h-1V467h-1V481h-1V474h-1V485h-1V486h-1V494h-1V483h-1V490h-1V487h-1V488h-1V482h-1V484h-1V478h-1V486h-1V490h-1V472h-1V477h-1V473h-1V483h-1V491h-1V466h-1V495h-1V500h-1V475h-1V494h-1V470h-1V479h-1V461h-1V494h-1V476h-1V461h-1V472h-1V483h-1V489h-1V492h-1V475h-1V491h-1V475h-1V497h-1V475h-1V493h-1V481h-1V465h-1V465h-1V482h-1V484h-1V485h-1V478h-1V490h-1V474h-1V485h-1V469h-1V494h-1V481h-1V481h-1V467h-1V483h-1V500h-1V457h-1V468h-1V458h-1V478h-1V467h-1V490h-1V487h-1V459h-1V469h-1V460h-1V463h-1V471h-1V485h-1V465h-1V484h-1V470h-1V478h-1V480h-1V476h-1V489h-1V476h-1V486h-1V500h-1V483h-1V484h-1V470h-1V460h-1V478h-1V493h-1V490h-1V497h-1V491h-1V476h-1V497h-1V485h-1V485h-1V477h-1V482h-1V494h-1V490h-1V500h-1V444h-1V446h-1V440h-1V438h-1V435h-1V437h-1V434h-1V444h-1V441h-1V452h-1V449h-1V446h-1V450h-1V447h-1V458h-1V449h-1V433h-1V455h-1V438h-1V461h-1V454h-1V468h-1V445h-1V443h-1V444h-1V442h-1V448h-1V432h-1V431h-1V439h-1V433h-1V437h-1V440h-1V441h-1V438h-1V438h-1V441h-1V439h-1V445h-1V449h-1V449h-1V452h-1V453h-1V444h-1V461h-1V451h-1V438h-1V453h-1V451h-1V451h-1V464h-1V445h-1V447h-1V438h-1V433h-1V445h-1V433h-1V445h-1V437h-1V446h-1V448h-1V439h-1V472h-1V442h-1V484h-1V447h-1V444h-1V434h-1V452h-1V443h-1V465h-1V434h-1V452h-1V438h-1V439h-1V456h-1V443h-1V446h-1V446h-1V436h-1V444h-1V436h-1V455h-1V454h-1V454h-1V433h-1V434h-1V453h-1V436h-1V447h-1V440h-1V454h-1V448h-1V445h-1V435h-1V445h-1V439h-1V435h-1V480h-1V456h-1V488h-1V437h-1V441h-1V441h-1V433h-1V439h-1V437h-1V442h-1V444h-1V456h-1V457h-1V440h-1V441h-1V440h-1V441h-1V441h-1V455h-1V455h-1V449h-1V439h-1V451h-1V457h-1V463h-1V482h-1V446h-1V495h-1V443h-1V454h-1V440h-1V436h-1V436h-1V437h-1V453h-1V435h-1V448h-1V436h-1V457h-1V443h-1V444h-1V452h-1V439h-1V449h-1V447h-1V452h-1V456h-1V444h-1V451h-1V456h-1V456h-1V464h-1V472h-1V446h-1V452h-1V455h-1V454h-1V439h-1V446h-1V440h-1V441h-1V442h-1V448h-1V440h-1V443h-1V448h-1V453h-1V445h-1V457h-1V451h-1V448h-1V437h-1V441h-1V437h-1V443h-1V453h-1V442h-1V477h-1V479h-1V450h-1V449h-1V440h-1V443h-1V438h-1V443h-1V434h-1V452h-1V448h-1V448h-1V438h-1V453h-1V452h-1V449h-1V444h-1V434h-1V445h-1V442h-1V462h-1V464h-1V472h-1V439h-1V450h-1V475h-1V465h-1V482h-1V429h-1V428h-1V426h-1V427h-1V427h-1V428h-1V428h-1V428h-1V428h-1V430h-1V429h-1V429h-1V428h-1V429h-1V429h-1V430h-1V430h-1V430h-1V432h-1V430h-1V431h-1V431h-1V433h-1V431h-1V435h-1V432h-1V436h-1V434h-1V433h-1V434h-1V440h-1V433h-1V437h-1V442h-1V444h-1V447h-1V445h-1V444h-1V447h-1V449h-1V457h-1V450h-1V467h-1V464h-1V452h-1V456h-1V480h-1V473h-1V483h-1V496h-1V474h-1V488h-1V458h-1V461h-1V479h-1V480h-1V477h-1V472h-1V483h-1V488h-1V493h-1V473h-1V473h-1V482h-1V484h-1V492h-1V459h-1V462h-1V475h-1V480h-1V474h-1V474h-1V468h-1V459h-1V485h-1V457h-1V454h-1V451h-1V453h-1V454h-1V460h-1V468h-1V476h-1V467h-1V467h-1V485h-1V457h-1V486h-1V477h-1V474h-1V466h-1V462h-1V460h-1V469h-1V476h-1V480h-1V475h-1V462h-1V490h-1V484h-1V467h-1V456h-1V456h-1V458h-1V478h-1V466h-1V449h-1V469h-1V480h-1V491h-1V461h-1V486h-1V482h-1V492h-1V464h-1V468h-1V484h-1V491h-1V490h-1V492h-1V473h-1V473h-1V461h-1V482h-1V467h-1V481h-1V473h-1V463h-1V456h-1V466h-1V475h-1V489h-1V468h-1V457h-1V458h-1V463h-1V481h-1V466h-1V463h-1V451h-1V456h-1V466h-1V485h-1V474h-1V484h-1V483h-1V489h-1V486h-1V480h-1V484h-1V497h-1V477h-1V472h-1V461h-1V480h-1V464h-1V488h-1V466h-1V489h-1V487h-1V464h-1V490h-1V468h-1V470h-1V483h-1V466h-1V475h-1V488h-1V467h-1V493h-1V500h-1V468h-1V500h-1V488h-1V497h-1V483h-1V465h-1V467h-1V452h-1V474h-1V476h-1V463h-1V477h-1V461h-1V489h-1V464h-1V483h-1V466h-1V461h-1V460h-1V475h-1V458h-1V480h-1V481h-1V458h-1V475h-1V492h-1V471h-1V493h-1V468h-1V485h-1V482h-1V474h-1V446h-1V471h-1V463h-1V457h-1V463h-1V492h-1V453h-1V468h-1V466h-1V475h-1V463h-1V479h-1V475h-1V475h-1V487h-1V487h-1V485h-1V480h-1V497h-1V482h-1V500h-1V486h-1V455h-1V500h-1V446h-1V450h-1V435h-1V426h-1V426h-1V426h-1V426h-1V426h-1V426h-1V426h-1V426h-1V427h-1V427h-1V427h-1V428h-1V428h-1V427h-1V428h-1V429h-1V429h-1V429h-1V430h-1V433h-1V434h-1V435h-1V433h-1V441h-1V437h-1V437h-1V441h-1V450h-1V447h-1V449h-1V458h-1V443h-1V434h-1V454h-1V444h-1V439h-1V438h-1V449h-1V439h-1V449h-1V463h-1V471h-1V470h-1V456h-1V480h-1V466h-1V491h-1V450h-1V463h-1V462h-1V463h-1V456h-1V462h-1V442h-1V445h-1V469h-1V463h-1V439h-1V470h-1V456h-1V454h-1V445h-1V465h-1V446h-1V455h-1V449h-1V440h-1V456h-1V442h-1V449h-1V465h-1V444h-1V465h-1V446h-1V447h-1V447h-1V454h-1V438h-1V447h-1V448h-1V441h-1V444h-1V458h-1V460h-1V443h-1V460h-1V451h-1V449h-1V455h-1V466h-1V463h-1V468h-1V447h-1V453h-1V450h-1V468h-1V461h-1V483h-1V447h-1V447h-1V442h-1V440h-1V453h-1V450h-1V446h-1V465h-1V458h-1V448h-1V441h-1V457h-1V455h-1V469h-1V440h-1V449h-1V441h-1V446h-1V471h-1V444h-1V459h-1V474h-1V461h-1V474h-1V493h-1V440h-1V433h-1V433h-1V438h-1V432h-1V439h-1V435h-1V432h-1V438h-1V436h-1V435h-1V435h-1V448h-1V449h-1V454h-1V448h-1V451h-1V448h-1V447h-1V442h-1V463h-1V452h-1V449h-1V471h-1V453h-1V437h-1V439h-1V433h-1V432h-1V435h-1V443h-1V436h-1V444h-1V442h-1V449h-1V440h-1V434h-1V441h-1V448h-1V444h-1V441h-1V442h-1V447h-1V441h-1V447h-1V453h-1V457h-1V452h-1V450h-1V459h-1V473h-1V441h-1V428h-1V427h-1V428h-1V431h-1V429h-1V430h-1V430h-1V435h-1V434h-1V438h-1V439h-1V439h-1V441h-1V435h-1V440h-1V438h-1V445h-1V437h-1V441h-1V442h-1V447h-1V448h-1V452h-1V458h-1V430h-1V428h-1V428h-1V431h-1V430h-1V430h-1V432h-1V430h-1V438h-1V434h-1V434h-1V441h-1V438h-1V441h-1V444h-1V445h-1V448h-1V442h-1V443h-1V438h-1V442h-1V440h-1V441h-1V440h-1V442h-1V423h-1V423h-1V423h-1V423h-1V423h-1V423h-1V423h-1V423h-1Z" fill="#3232c8"/>
<path d="M146 422V422h1V422h1V422h1V422h1V422h1V422h1V422h1V422h1V417h1V417h1V417h1V416h1V416h1V414h1V414h1V413h1V413h1V414h1V414h1V415h1V415h1V416h1V416h1V417h1V417h1V418h1V418h1V418h1V418h1V418h1V419h1V420h1V417h1V414h1V412h1V413h1V413h1V413h1V414h1V415h1V415h1V415h1V414h1V416h1V416h1V416h1V417h1V418h1V418h1V418h1V418h1V419h1V419h1V419h1V420h1V420h1V420h1V415h1V411h1V411h1V413h1V413h1V413h1V414h1V414h1V414h1V415h1V413h1V415h1V414h1V414h1V415h1V416h1V415h1V416h1V416h1V416h1V417h1V417h1V418h1V418h1V418h1V418h1V417h1V416h1V414h1V414h1V414h1V414h1V415h1V414h1V415h1V415h1V416h1V415h1V415h1V416h1V416h1V416h1V417h1V415h1V415h1V416h1V416h1V417h1V417h1V417h1V418h1V418h1V410h1V409h1V409h1V410h1V410h1V411h1V411h1V413h1V412h1V414h1V414h1V414h1V414h1V415h1V415h1V415h1V416h1V416h1V414h1V414h1V415h1V415h1V415h1V416h1V416h1V411h1V412h1V412h1V411h1V412h1V413h1V412h1V412h1V412h1V412h1V411h1V412h1V413h1V413h1V413h1V413h1V411h1V412h1V412h1V412h1V412h1V413h1V413h1V413h1V413h1V411h1V411h1V411h1V411h1V413h1V412h1V413h1V413h1V414h1V413h1V414h1V414h1V415h1V414h1V415h1V415h1V414h1V413h1V413h1V413h1V414h1V414h1V414h1V414h1V414h1V415h1V414h1V415h1V415h1V415h1V415h1V415h1V415h1V415h1V415h1V416h1V415h1V416h1V416h1V416h1V416h1V416h1V416h1V417h1V416h1V416h1V416h1V417h1V417h1V418h1V418h1V417h1V417h1V417h1V418h1V419h1V419h1V419h1V419h1V419h1V419h1V420h1V419h1V420h1V419h1V420h1V419h1V419h1V420h1V420h1V420h1V420h1V420h1V417h1V415h1V412h1V409h1V402h1V396h1V397h1V401h1V400h1V402h1V403h1V404h1V403h1V406h1V407h1V407h1V406h1V407h1V408h1V408h1V408h1V408h1V410h1V407h1V407h1V407h1V409h1V409h1V408h1V401h1V403h1V403h1V397h1V400h1V402h1V401h1V404h1V405h1V406h1V405h1V406h1V407h1V408h1V408h1V409h1V407h1V406h1V405h1V407h1V408h1V408h1V409h1V409h1V409h1V400h1V403h1V404h1V403h1V405h1V405h1V406h1V401h1V401h1V404h1V405h1V404h1V407h1V406h1V406h1V408h1V407h1V408h1V408h1V408h1V410h1V408h1V409h1V408h1V410h1V402h1V400h1V402h1V404h1V403h1V406h1V406h1V404h1V404h1V405h1V405h1V406h1V406h1V408h1V407h1V409h1V408h1V406h1V408h1V406h1V407h1V408h1V408h1V409h1V409h1V409h1V402h1V403h1V403h1V405h1V405h1V407h1V405h1V400h1V403h1V402h1V405h1V405h1V404h1V405h1V407h1V407h1V407h1V409h1V407h1V409h1V409h1V410h1V408h1V407h1V409h1V400h1V402h1V404h1V404h1V405h1V404h1V405h1V404h1V405h1V405h1V406h1V407h1V407h1V408h1V409h1V410h1V409h1V410h1V410h1V410h1V409h1V411h1V410h1V406h1V407h1V395h1V398h1V400h1V401h1V403h1V404h1V399h1V401h1V402h1V403h1V406h1V405h1V407h1V406h1V406h1V407h1V409h1V408h1V410h1V409h1V409h1V410h1V410h1V411h1V409h1V399h1V403h1V404h1V406h1V407h1V407h1V410h1V411h1V412h1V413h1V414h1V415h1V416h1V416h1V417h1V415h1V416h1V416h1V416h1V416h1V417h1V417h1V417h1V417h1V418h1V418h1V414h1V415h1V415h1V416h1V416h1V417h1V417h1V418h1V417h1V418h1V418h1V418h1V418h1V419h1V419h1V419h1V419h1V419h1V420h1V420h1V420h1V420h1V419h1V418h1V417h1V411h1V413h1V413h1V414h1V413h1V414h1V414h1V414h1V414h1V415h1V415h1V416h1V416h1V416h1V416h1V416h1V416h1V416h1V417h1V417h1V417h1V417h1V417h1V417h1V417h1V413h1V414h1V414h1V415h1V415h1V414h1V414h1V415h1V415h1V415h1V416h1V416h1V416h1V416h1V414h1V415h1V416h1V416h1V416h1V416h1V416h1V417h1V417h1V417h1V417h1V410h1V411h1V412h1V412h1V413h1V414h1V414h1V414h1V415h1V415h1V415h1V415h1V416h1V415h1V416h1V417h1V416h1V414h1V415h1V415h1V415h1V416h1V416h1V417h1V417h1V417h1V414h1V414h1V414h1V414h1V415h1V415h1V415h1V416h1V414h1V414h1V415h1V415h1V416h1V416h1V416h1V416h1V417h1V417h1V416h1V417h1V417h1V417h1V417h1V415h1V416h1V412h1V413h1V414h1V413h1V414h1V414h1V414h1V415h1V415h1V415h1V415h1V415h1V416h1V416h1V416h1V416h1V416h1V417h1V417h1V416h1V416h1V416h1V416h1V417h1V416h1V413h1V413h1V413h1V414h1V414h1V414h1V415h1V415h1V415h1V415h1V416h1V416h1V416h1V417h1V417h1V417h1V415h1V415h1V415h1V416h1V416h1V416h1V416h1V416h1V417h1V413h1V413h1V412h1V412h1V413h1V414h1V413h1V413h1V415h1V415h1V415h1V415h1V414h1V415h1V415h1V416h1V416h1V416h1V416h1V417h1V415h1V416h1V416h1V416h1V416h1V416h1V413h1V413h1V414h1V415h1V414h1V414h1V414h1V415h1V415h1V415h1V416h1V415h1V416h1V416h1V416h1V416h1V416h1V416h1V416h1V417h1V417h1V417h1V416h1V417h1V416h1V397h1V398h1V401h1V400h1V394h1V396h1V396h1V398h1V400h1V400h1V400h1V401h1V404h1V404h1V403h1V404h1V404h1V404h1V404h1V405h1V404h1V404h1V407h1V405h1V407h1V395h1V398h1V399h1V400h1V401h1V400h1V403h1V402h1V403h1V405h1V405h1V406h1V405h1V406h1V406h1V408h1V407h1V407h1V407h1V408h1V407h1V404h1V405h1V406h1V406h1V395h1V397h1V398h1V395h1V398h1V400h1V400h1V401h1V403h1V398h1V402h1V402h1V402h1V402h1V404h1V404h1V406h1V406h1V406h1V401h1V403h1V404h1V404h1V405h1V406h1V405h1V397h1V396h1V399h1V400h1V400h1V402h1V400h1V403h1V404h1V403h1V405h1V405h1V404h1V406h1V407h1V403h1V402h1V405h1V404h1V405h1V406h1V408h1V406h1V408h1V402h1V389h1V392h1V394h1V395h1V398h1V399h1V402h1V400h1V404h1V402h1V405h1V404h1V404h1V405h1V406h1V405h1V406h1V406h1V407h1V407h1V408h1V407h1V407h1V409h1V408h1V392h1V394h1V396h1V397h1V400h1V399h1V399h1V400h1V402h1V404h1V403h1V404h1V404h1V405h1V405h1V405h1V406h1V408h1V406h1V404h1V407h1V406h1V406h1V406h1V406h1V397h1V399h1V396h1V397h1V401h1V401h1V403h1V403h1V403h1V403h1V404h1V405h1V407h1V402h1V401h1V401h1V403h1V404h1V404h1V405h1V404h1V406h1V405h1V406h1V407h1V407h1V399h1V400h1V401h1V398h1V399h1V400h1V402h1V403h1V404h1V404h1V404h1V401h1V402h1V403h1V406h1V406h1V406h1V406h1V407h1V408h1V408h1V410h1V409h1V411h1V409h1V403h1V405h1V400h1V403h1V403h1V404h1V407h1V408h1V408h1V409h1V410h1V437h-1V436h-1V435h-1V437h-1V438h-1V438h-1V441h-1V441h-1V443h-1V445h-1V445h-1V438h-1V438h-1V440h-1V441h-1V441h-1V442h-1V440h-1V439h-1V439h-1V439h-1V439h-1V441h-1V441h-1V441h-1V441h-1V444h-1V444h-1V444h-1V445h-1V448h-1V443h-1V443h-1V446h-1V446h-1V448h-1V439h-1V438h-1V439h-1V438h-1V441h-1V437h-1V438h-1V436h-1V437h-1V437h-1V440h-1V438h-1V438h-1V441h-1V440h-1V441h-1V441h-1V442h-1V444h-1V442h-1V444h-1V446h-1V449h-1V443h-1V446h-1V446h-1V437h-1V438h-1V438h-1V439h-1V438h-1V439h-1V439h-1V439h-1V437h-1V438h-1V440h-1V440h-1V438h-1V441h-1V440h-1V440h-1V442h-1V442h-1V444h-1V443h-1V445h-1V445h-1V450h-1V449h-1V451h-1V441h-1V442h-1V437h-1V438h-1V438h-1V438h-1V439h-1V438h-1V439h-1V440h-1V441h-1V441h-1V443h-1V445h-1V444h-1V446h-1V448h-1V447h-1V449h-1V441h-1V441h-1V442h-1V444h-1V445h-1V445h-1V436h-1V438h-1V438h-1V438h-1V437h-1V439h-1V438h-1V438h-1V438h-1V441h-1V438h-1V437h-1V438h-1V440h-1V439h-1V441h-1V441h-1V441h-1V442h-1V444h-1V445h-1V444h-1V445h-1V446h-1V450h-1V438h-1V439h-1V439h-1V435h-1V435h-1V437h-1V436h-1V436h-1V437h-1V439h-1V438h-1V438h-1V441h-1V439h-1V442h-1V443h-1V445h-1V444h-1V440h-1V440h-1V442h-1V443h-1V442h-1V444h-1V445h-1V444h-1V435h-1V437h-1V436h-1V437h-1V438h-1V439h-1V439h-1V440h-1V439h-1V439h-1V439h-1V439h-1V439h-1V441h-1V440h-1V440h-1V441h-1V442h-1V444h-1V443h-1V446h-1V447h-1V449h-1V450h-1V445h-1V437h-1V436h-1V438h-1V437h-1V437h-1V439h-1V439h-1V438h-1V440h-1V441h-1V438h-1V438h-1V438h-1V440h-1V439h-1V440h-1V440h-1V442h-1V442h-1V442h-1V442h-1V444h-1V445h-1V448h-1V446h-1V428h-1V429h-1V429h-1V429h-1V430h-1V429h-1V430h-1V429h-1V430h-1V429h-1V428h-1V429h-1V430h-1V430h-1V430h-1V430h-1V430h-1V430h-1V430h-1V431h-1V432h-1V433h-1V432h-1V434h-1V433h-1V430h-1V429h-1V428h-1V428h-1V428h-1V428h-1V429h-1V429h-1V430h-1V430h-1V429h-1V429h-1V429h-1V429h-1V430h-1V430h-1V430h-1V430h-1V430h-1V431h-1V432h-1V432h-1V431h-1V433h-1V433h-1V433h-1V428h-1V428h-1V429h-1V429h-1V429h-1V429h-1V429h-1V429h-1V430h-1V430h-1V431h-1V429h-1V429h-1V429h-1V430h-1V430h-1V430h-1V430h-1V431h-1V430h-1V432h-1V432h-1V432h-1V432h-1V433h-1V429h-1V429h-1V430h-1V430h-1V428h-1V428h-1V428h-1V428h-1V428h-1V429h-1V429h-1V429h-1V429h-1V429h-1V430h-1V430h-1V430h-1V430h-1V430h-1V430h-1V431h-1V432h-1V430h-1V432h-1V431h-1V428h-1V428h-1V428h-1V428h-1V428h-1V428h-1V429h-1V428h-1V429h-1V429h-1V429h-1V430h-1V430h-1V430h-1V430h-1V430h-1V431h-1V431h-1V431h-1V431h-1V431h-1V432h-1V433h-1V433h-1V434h-1V430h-1V430h-1V431h-1V427h-1V428h-1V428h-1V428h-1V429h-1V428h-1V428h-1V429h-1V429h-1V428h-1V429h-1V429h-1V429h-1V430h-1V430h-1V431h-1V430h-1V432h-1V431h-1V432h-1V432h-1V433h-1V433h-1V429h-1V429h-1V429h-1V429h-1V430h-1V428h-1V428h-1V429h-1V428h-1V429h-1V429h-1V429h-1V430h-1V430h-1V431h-1V432h-1V432h-1V433h-1V431h-1V430h-1V430h-1V432h-1V431h-1V433h-1V432h-1V429h-1V429h-1V429h-1V430h-1V428h-1V428h-1V429h-1V429h-1V429h-1V429h-1V429h-1V430h-1V430h-1V429h-1V429h-1V429h-1V430h-1V431h-1V430h-1V431h-1V431h-1V432h-1V432h-1V432h-1V432h-1V429h-1V428h-1V427h-1V425h-1V426h-1V426h-1V426h-1V427h-1V427h-1V427h-1V426h-1V427h-1V427h-1V427h-1V428h-1V428h-1V428h-1V429h-1V429h-1V430h-1V428h-1V429h-1V430h-1V430h-1V430h-1V428h-1V428h-1V428h-1V429h-1V429h-1V429h-1V430h-1V430h-1V429h-1V431h-1V430h-1V429h-1V429h-1V429h-1V431h-1V433h-1V433h-1V435h-1V437h-1V440h-1V441h-1V442h-1V445h-1V445h-1V444h-1V445h-1V437h-1V437h-1V440h-1V439h-1V440h-1V437h-1V436h-1V438h-1V438h-1V439h-1V439h-1V438h-1V439h-1V440h-1V441h-1V442h-1V441h-1V444h-1V444h-1V445h-1V448h-1V443h-1V445h-1V446h-1V447h-1V437h-1V437h-1V437h-1V439h-1V441h-1V436h-1V436h-1V438h-1V437h-1V438h-1V438h-1V437h-1V440h-1V440h-1V441h-1V440h-1V441h-1V443h-1V442h-1V445h-1V445h-1V445h-1V448h-1V447h-1V450h-1V437h-1V437h-1V438h-1V438h-1V439h-1V439h-1V438h-1V440h-1V440h-1V438h-1V438h-1V438h-1V440h-1V441h-1V442h-1V437h-1V438h-1V437h-1V438h-1V439h-1V439h-1V440h-1V442h-1V443h-1V443h-1V436h-1V437h-1V436h-1V436h-1V437h-1V438h-1V437h-1V438h-1V436h-1V438h-1V437h-1V436h-1V437h-1V438h-1V438h-1V439h-1V440h-1V438h-1V439h-1V439h-1V440h-1V440h-1V443h-1V444h-1V442h-1V443h-1V435h-1V436h-1V437h-1V438h-1V437h-1V437h-1V438h-1V438h-1V439h-1V439h-1V438h-1V440h-1V440h-1V442h-1V443h-1V438h-1V438h-1V439h-1V440h-1V440h-1V442h-1V441h-1V442h-1V442h-1V446h-1V436h-1V437h-1V435h-1V437h-1V436h-1V436h-1V436h-1V436h-1V436h-1V437h-1V437h-1V436h-1V437h-1V438h-1V438h-1V437h-1V438h-1V439h-1V440h-1V440h-1V443h-1V442h-1V444h-1V442h-1V444h-1V436h-1V436h-1V437h-1V438h-1V436h-1V439h-1V437h-1V439h-1V439h-1V440h-1V440h-1V441h-1V441h-1V442h-1V442h-1V443h-1V444h-1V441h-1V443h-1V443h-1V442h-1V444h-1V446h-1V445h-1V446h-1V437h-1V435h-1V431h-1V429h-1V425h-1V425h-1V425h-1V425h-1V425h-1V425h-1V425h-1V425h-1V425h-1V425h-1V425h-1V426h-1V425h-1V426h-1V425h-1V426h-1V426h-1V426h-1V426h-1V426h-1V426h-1V427h-1V428h-1V429h-1V429h-1V429h-1V430h-1V430h-1V429h-1V430h-1V430h-1V431h-1V429h-1V430h-1V430h-1V430h-1V430h-1V430h-1V431h-1V431h-1V431h-1V432h-1V432h-1V432h-1V433h-1V430h-1V430h-1V430h-1V430h-1V430h-1V430h-1V430h-1V430h-1V431h-1V430h-1V431h-1V431h-1V431h-1V431h-1V431h-1V431h-1V431h-1V431h-1V431h-1V430h-1V430h-1V431h-1V431h-1V432h-1V432h-1V433h-1V433h-1V433h-1V433h-1V434h-1V433h-1V435h-1V434h-1V433h-1V435h-1V435h-1V434h-1V436h-1V433h-1V433h-1V433h-1V434h-1V433h-1V435h-1V434h-1V435h-1V436h-1V435h-1V435h-1V436h-1V432h-1V433h-1V433h-1V429h-1V429h-1V429h-1V430h-1V430h-1V431h-1V431h-1V432h-1V431h-1V431h-1V432h-1V432h-1V432h-1V432h-1V432h-1V433h-1V432h-1V434h-1V434h-1V436h-1V435h-1V432h-1V432h-1V433h-1V434h-1V427h-1V427h-1V427h-1V427h-1V428h-1V428h-1V428h-1V429h-1V429h-1V429h-1V429h-1V429h-1V430h-1V430h-1V430h-1V431h-1V431h-1V431h-1V431h-1V430h-1V430h-1V432h-1V431h-1V432h-1V430h-1V429h-1V428h-1V427h-1V428h-1V427h-1V428h-1V429h-1V428h-1V429h-1V429h-1V429h-1V431h-1V431h-1V431h-1V432h-1V430h-1V430h-1V431h-1V431h-1V432h-1V432h-1V432h-1V433h-1V431h-1V432h-1V432h-1V428h-1V425h-1V426h-1V426h-1V426h-1V426h-1V426h-1V426h-1V427h-1V427h-1V427h-1V427h-1V428h-1V428h-1V429h-1V429h-1V430h-1V430h-1V431h-1V431h-1V432h-1V433h-1V431h-1V431h-1V431h-1V428h-1V426h-1V426h-1V425h-1V426h-1V426h-1V426h-1V427h-1V427h-1V428h-1V428h-1V428h-1V429h-1V430h-1V430h-1V432h-1V430h-1V430h-1V429h-1V429h-1V428h-1V428h-1V428h-1V428h-1V427h-1V423h-1V423h-1V423h-1V423h-1V423h-1V423h-1V423h-1V423h-1Z" fill="#6464dc"/>
</svg>
<div class="b" style="left:0px;top:503px;width:1024px;height:115px;background:#a0a0a0"></div>
<div class="b" style="left:304px;top:363px;width:589px;height:244px;background:#f0f0f0;border:1px solid #2b84d6;box-shadow:0 2px 10px 1px rgba(0,0,0,0.28)"></div>
<div class="b" style="left:305px;top:364px;width:587px;height:33.5px;background:#fff"></div>
<div class="t" style="left:314px;top:374px;font-size:13px;line-height:13px;color:#111;font-weight:normal;">Vocal Remover</div>
<div class="b" style="left:760px;top:379px;width:11px;height:1px;background:#111"></div>
<div class="b" style="left:810px;top:374px;width:11px;height:11px;border:1px solid #111"></div>
<svg style="left:859px;top:373px" width="13" height="13"><path d="M1 1 L12 12 M12 1 L1 12" stroke="#111" stroke-width="1.1"/></svg>
<div class="t" style="left:316px;top:414.0px;font-size:12.9px;line-height:12.9px;color:#111;font-weight:normal;">Remove vocals or view Help:</div>
<div class="t" style="left:316px;top:450.2px;font-size:12.9px;line-height:12.9px;color:#111;font-weight:normal;">Removal choice:</div>
<div class="t" style="left:316px;top:486.5px;font-size:13.2px;line-height:13.2px;color:#111;font-weight:normal;">Lower frequency band limit (Hz):</div>
<div class="t" style="left:316px;top:522.5px;font-size:13.2px;line-height:13.2px;color:#111;font-weight:normal;">Upper frequency band limit (Hz):</div>
<div class="b" style="left:529px;top:408px;width:199px;height:25px;background:#e1e1e1;border:1px solid #adadad"></div>
<div class="t" style="left:534px;top:415px;font-size:13px;line-height:13px;color:#111;font-weight:normal;">Remove vocals</div>
<svg style="left:712px;top:418px" width="10" height="6"><path d="M0.5 0.5 L4.8 4.8 L9 0.5" stroke="#555" stroke-width="1.1" fill="none"/></svg>
<div class="b" style="left:529px;top:445px;width:199px;height:25px;background:#e1e1e1;border:1px solid #adadad"></div>
<div class="t" style="left:534px;top:452px;font-size:13px;line-height:13px;color:#111;font-weight:normal;">Simple (entire spectrum)</div>
<svg style="left:712px;top:455px" width="10" height="6"><path d="M0.5 0.5 L4.8 4.8 L9 0.5" stroke="#555" stroke-width="1.1" fill="none"/></svg>
<div class="b" style="left:529px;top:481px;width:199px;height:25px;background:#fff;border:1px solid #7a7a7a"></div>
<div class="t" style="left:535px;top:488px;font-size:13px;line-height:13px;color:#111;font-weight:normal;">500</div>
<div class="b" style="left:529px;top:517.5px;width:199px;height:25px;background:#fff;border:1px solid #7a7a7a"></div>
<div class="t" style="left:535px;top:524.5px;font-size:13px;line-height:13px;color:#111;font-weight:normal;">2000</div>
<div class="b" style="left:318px;top:567px;width:95px;height:26px;background:#e1e1e1;border:1px solid #adadad"></div>
<div class="t" style="left:318px;top:574px;width:95px;text-align:center;font-size:13px;line-height:13px;color:#111">Manage</div>
<div class="b" style="left:421px;top:567px;width:95px;height:26px;background:#e1e1e1;border:1px solid #adadad"></div>
<div class="t" style="left:421px;top:574px;width:95px;text-align:center;font-size:13px;line-height:13px;color:#111">Preview</div>
<div class="b" style="left:571px;top:567px;width:95px;height:26px;background:#e1e1e1;border:1px solid #adadad"></div>
<div class="t" style="left:571px;top:574px;width:95px;text-align:center;font-size:13px;line-height:13px;color:#111">Debug</div>
<div class="b" style="left:677px;top:567px;width:95px;height:26px;background:#e1e1e1;border:2px solid #0078d7"></div>
<div class="t" style="left:677px;top:574px;width:95px;text-align:center;font-size:13px;line-height:13px;color:#111">OK</div>
<div class="b" style="left:783px;top:567px;width:95px;height:26px;background:#e1e1e1;border:1px solid #adadad"></div>
<div class="t" style="left:783px;top:574px;width:95px;text-align:center;font-size:13px;line-height:13px;color:#111">Cancel</div></body></html>
